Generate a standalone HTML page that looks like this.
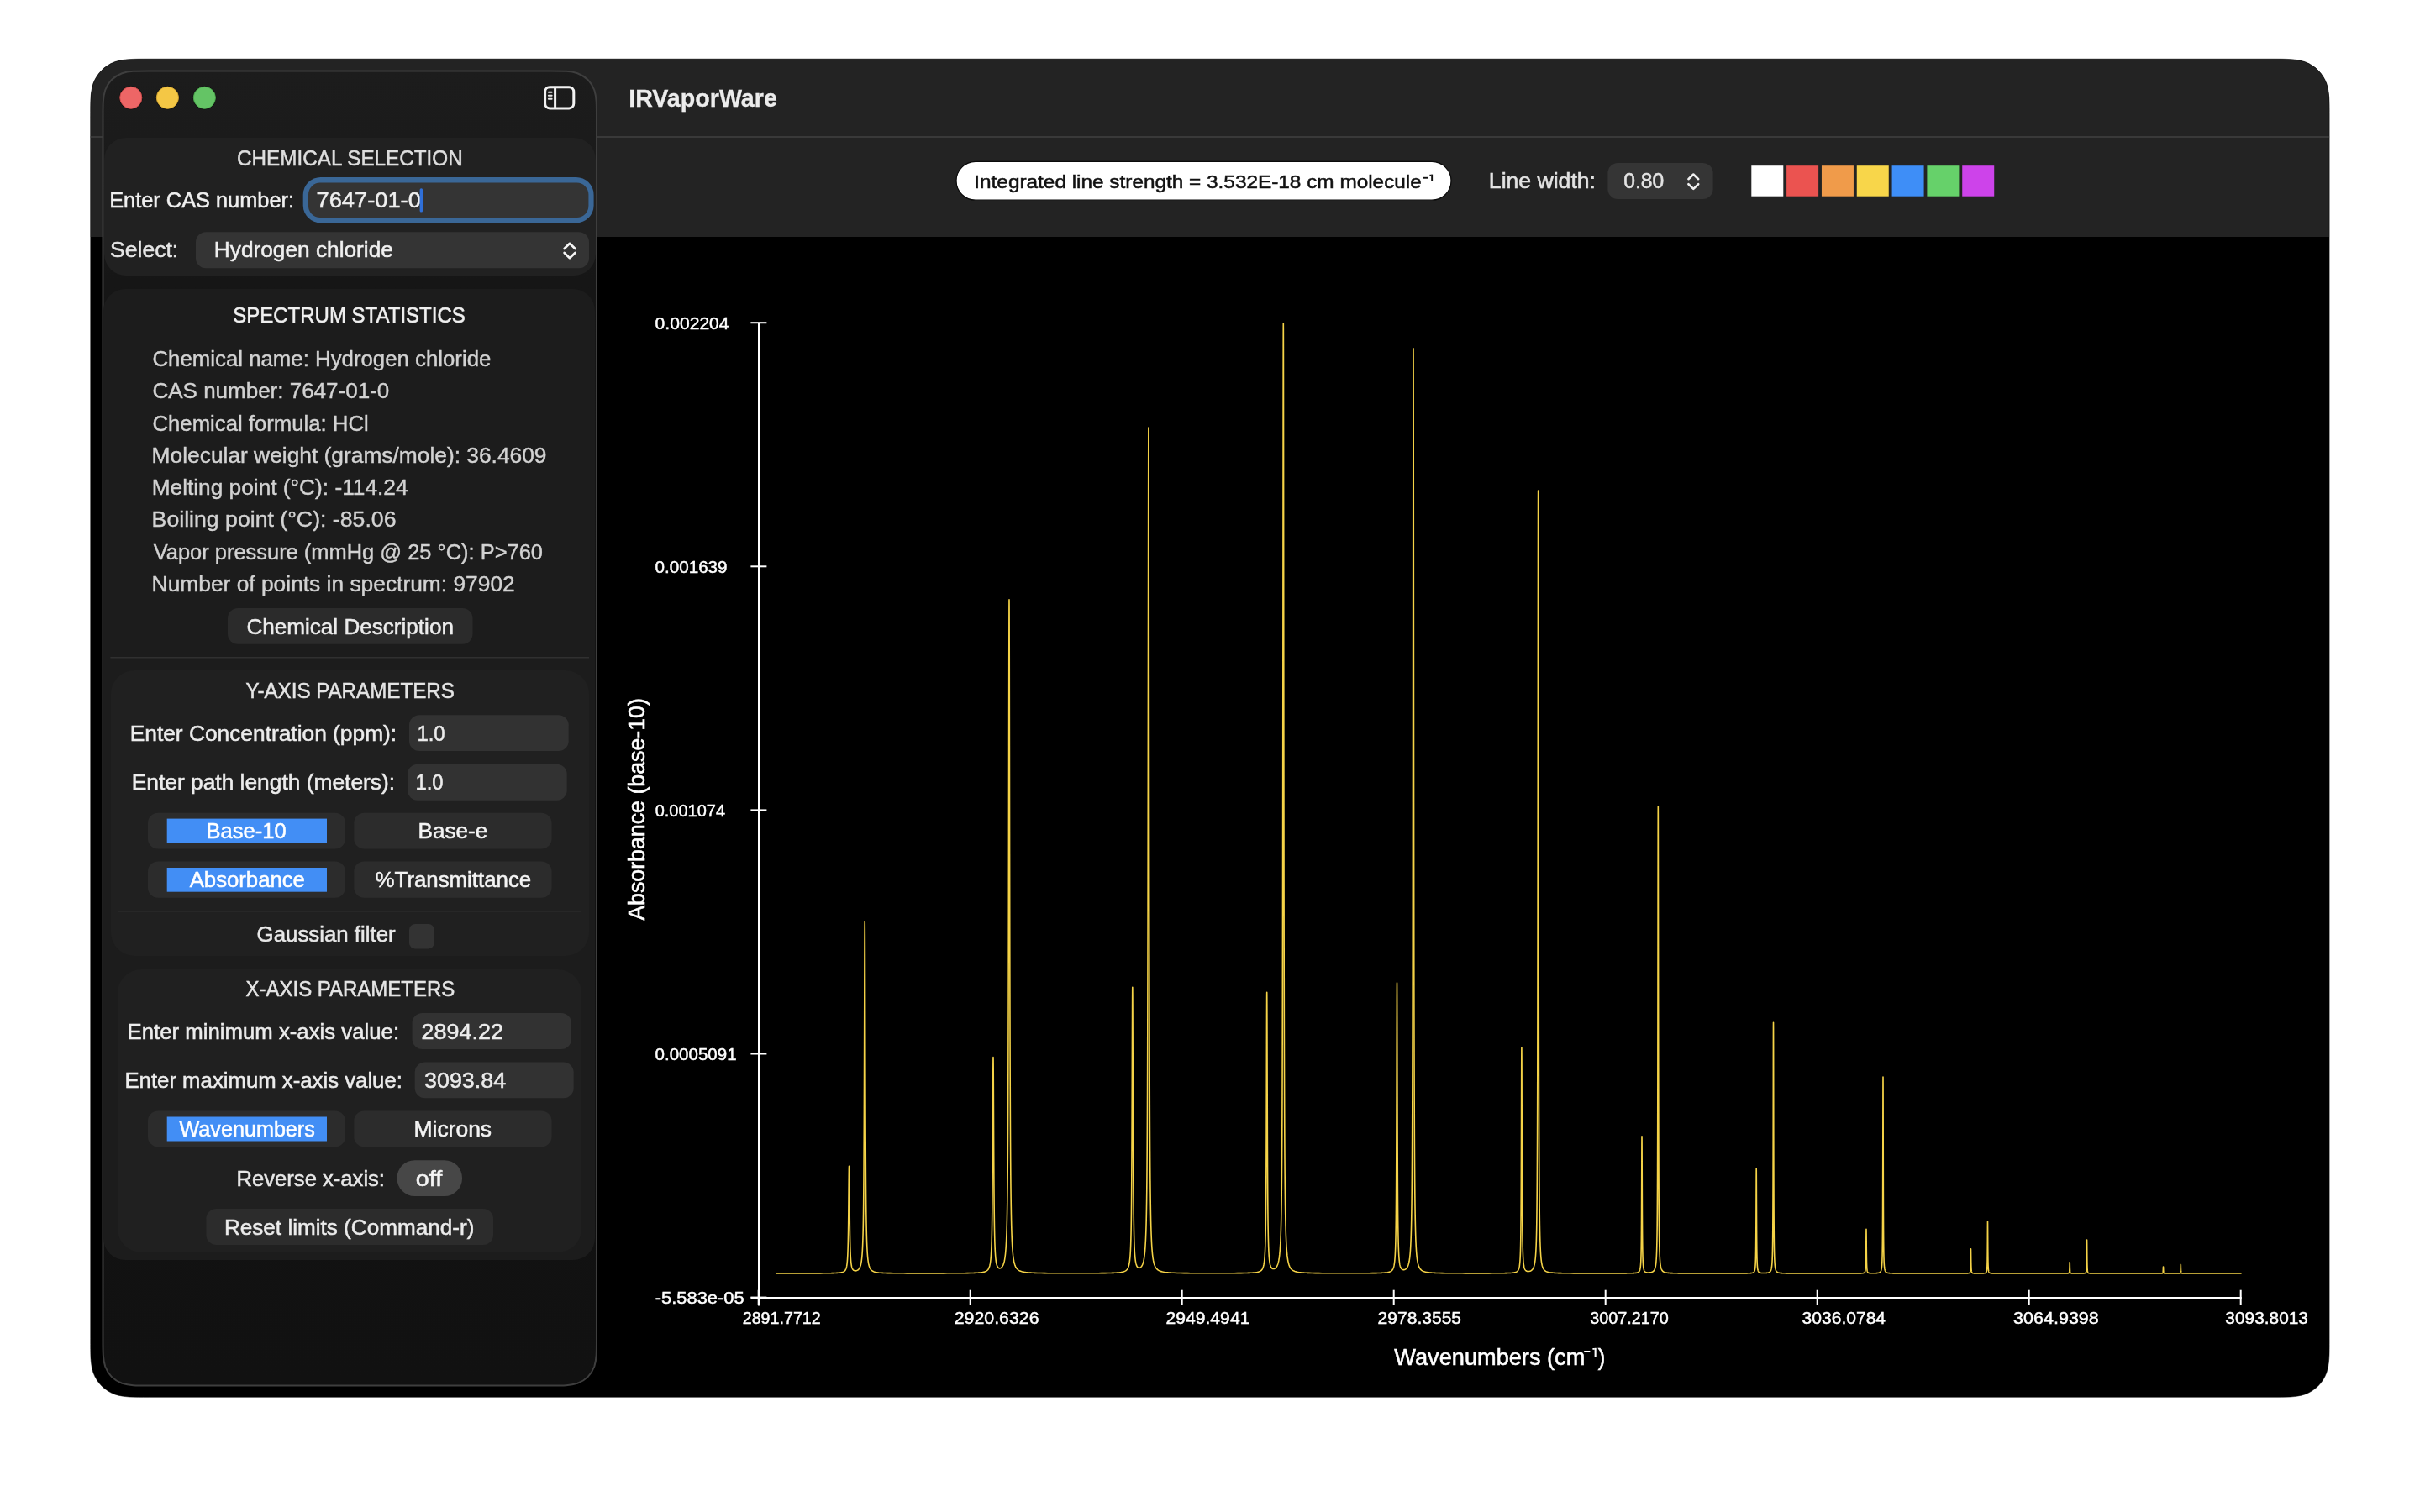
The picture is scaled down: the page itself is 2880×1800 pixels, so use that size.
<!DOCTYPE html><html><head><meta charset="utf-8"><title>IRVaporWare</title><style>html,body{margin:0;padding:0;background:#fff;width:2880px;height:1800px;overflow:hidden}svg{display:block;will-change:transform}text{font-family:"Liberation Sans",sans-serif}</style></head><body>
<svg width="2880" height="1800" viewBox="0 0 2880 1800">
<defs><clipPath id="win"><path d="M177.92 70.20 L2701.88 70.20 C2722.13 70.20 2732.25 70.20 2743.15 73.65 C2755.05 77.98 2764.42 87.35 2768.75 99.25 C2772.20 110.15 2772.20 120.27 2772.20 140.52 L2772.20 1593.08 C2772.20 1613.33 2772.20 1623.45 2768.75 1634.35 C2764.42 1646.25 2755.05 1655.62 2743.15 1659.95 C2732.25 1663.40 2722.13 1663.40 2701.88 1663.40 L177.92 1663.40 C157.67 1663.40 147.55 1663.40 136.65 1659.95 C124.75 1655.62 115.38 1646.25 111.05 1634.35 C107.60 1623.45 107.60 1613.33 107.60 1593.08 L107.60 140.52 C107.60 120.27 107.60 110.15 111.05 99.25 C115.38 87.35 124.75 77.98 136.65 73.65 C147.55 70.20 157.67 70.20 177.92 70.20 Z"/></clipPath>
<linearGradient id="sbg" gradientUnits="userSpaceOnUse" x1="0" y1="84" x2="0" y2="1650"><stop offset="0" stop-color="#1c1c1c"/><stop offset="0.051" stop-color="#1b1b1b"/><stop offset="0.16" stop-color="#161616"/><stop offset="1" stop-color="#111111"/></linearGradient></defs>
<rect width="2880" height="1800" fill="#fff"/>
<g clip-path="url(#win)">
<rect x="107.60" y="70.20" width="2664.60" height="1593.20" rx="0.00" fill="#000" />
<rect x="107.60" y="70.20" width="2664.60" height="211.80" rx="0.00" fill="#232323" />
<rect x="107.60" y="162.00" width="2664.60" height="2.00" rx="0.00" fill="#393939" />
</g>
<path d="M177.92 70.20 L2701.88 70.20 C2722.13 70.20 2732.25 70.20 2743.15 73.65 C2755.05 77.98 2764.42 87.35 2768.75 99.25 C2772.20 110.15 2772.20 120.27 2772.20 140.52 L2772.20 1593.08 C2772.20 1613.33 2772.20 1623.45 2768.75 1634.35 C2764.42 1646.25 2755.05 1655.62 2743.15 1659.95 C2732.25 1663.40 2722.13 1663.40 2701.88 1663.40 L177.92 1663.40 C157.67 1663.40 147.55 1663.40 136.65 1659.95 C124.75 1655.62 115.38 1646.25 111.05 1634.35 C107.60 1623.45 107.60 1613.33 107.60 1593.08 L107.60 140.52 C107.60 120.27 107.60 110.15 111.05 99.25 C115.38 87.35 124.75 77.98 136.65 73.65 C147.55 70.20 157.67 70.20 177.92 70.20 Z" fill="none" stroke="#000" stroke-opacity="0.5" stroke-width="1"/>
<text x="748.27" y="127.00" font-size="30.00" fill="#ececec" font-weight="bold" textLength="176.54" lengthAdjust="spacingAndGlyphs"  stroke="#ececec" stroke-width="0.30">IRVaporWare</text>
<rect x="1138.00" y="192.40" width="589.00" height="45.80" rx="23.00" fill="#ffffff" stroke="#0a0a0a" stroke-width="1.2"/>
<text x="1159.30" y="223.70" font-size="22.20" fill="#111111" textLength="532.53" lengthAdjust="spacingAndGlyphs"  stroke="#111111" stroke-width="0.50">Integrated line strength = 3.532E-18 cm molecule</text>
<rect x="1693.2" y="210.8" width="6.7" height="1.9" fill="#111"/>
<rect x="1703.2" y="207.6" width="1.9" height="7.6" fill="#111"/><rect x="1701.4" y="207.8" width="2" height="1.6" fill="#111"/>
<text x="1771.89" y="224.40" font-size="25.50" fill="#e3e3e3" textLength="127.06" lengthAdjust="spacingAndGlyphs"  stroke="#e3e3e3" stroke-width="0.55">Line width:</text>
<rect x="1913.40" y="194.00" width="125.20" height="43.00" rx="12.00" fill="#353535" />
<text x="1932.31" y="224.40" font-size="25.50" fill="#e3e3e3" textLength="47.98" lengthAdjust="spacingAndGlyphs"  stroke="#e3e3e3" stroke-width="0.55">0.80</text>
<path d="M2009.4 213.2 L2015.3 207.5 L2021.2 213.2 M2009.4 219.2 L2015.3 224.9 L2021.2 219.2" fill="none" stroke="#f0f0f0" stroke-width="2.6" stroke-linecap="round" stroke-linejoin="round"/>
<rect x="2084.30" y="197.20" width="38.00" height="36.50" rx="0.00" fill="#ffffff" />
<rect x="2126.12" y="197.20" width="38.00" height="36.50" rx="0.00" fill="#eb5350" />
<rect x="2167.94" y="197.20" width="38.00" height="36.50" rx="0.00" fill="#f09b4a" />
<rect x="2209.76" y="197.20" width="38.00" height="36.50" rx="0.00" fill="#f8d64a" />
<rect x="2251.58" y="197.20" width="38.00" height="36.50" rx="0.00" fill="#3e8ef7" />
<rect x="2293.40" y="197.20" width="38.00" height="36.50" rx="0.00" fill="#66d16a" />
<rect x="2335.22" y="197.20" width="38.00" height="36.50" rx="0.00" fill="#cd43ea" />
<g fill="#fff">
<rect x="902" y="384" width="2" height="1170.5"/>
<rect x="893.4" y="383.20" width="19" height="2"/>
<rect x="893.4" y="673.30" width="19" height="2"/>
<rect x="893.4" y="963.40" width="19" height="2"/>
<rect x="893.4" y="1253.50" width="19" height="2"/>
<rect x="893.4" y="1543.60" width="19" height="2"/>
<rect x="893.6" y="1544" width="1774.1" height="2"/>
<rect x="901.70" y="1535.7" width="2" height="17.5"/>
<rect x="1153.70" y="1535.7" width="2" height="17.5"/>
<rect x="1405.70" y="1535.7" width="2" height="17.5"/>
<rect x="1657.70" y="1535.7" width="2" height="17.5"/>
<rect x="1909.70" y="1535.7" width="2" height="17.5"/>
<rect x="2161.70" y="1535.7" width="2" height="17.5"/>
<rect x="2413.70" y="1535.7" width="2" height="17.5"/>
<rect x="2665.70" y="1535.7" width="2" height="17.5"/>
</g>
<text x="779.60" y="391.80" font-size="20.20" fill="#fff" textLength="87.99" lengthAdjust="spacingAndGlyphs"  stroke="#fff" stroke-width="0.45">0.002204</text>
<text x="779.62" y="681.90" font-size="20.20" fill="#fff" textLength="85.93" lengthAdjust="spacingAndGlyphs"  stroke="#fff" stroke-width="0.45">0.001639</text>
<text x="779.64" y="972.00" font-size="20.20" fill="#fff" textLength="83.42" lengthAdjust="spacingAndGlyphs"  stroke="#fff" stroke-width="0.45">0.001074</text>
<text x="779.62" y="1262.10" font-size="20.20" fill="#fff" textLength="96.95" lengthAdjust="spacingAndGlyphs"  stroke="#fff" stroke-width="0.45">0.0005091</text>
<text x="779.75" y="1552.20" font-size="20.20" fill="#fff" textLength="105.94" lengthAdjust="spacingAndGlyphs"  stroke="#fff" stroke-width="0.45">-5.583e-05</text>
<text x="883.74" y="1576.00" font-size="19.80" fill="#fff" textLength="93.03" lengthAdjust="spacingAndGlyphs"  stroke="#fff" stroke-width="0.45">2891.7712</text>
<text x="1135.75" y="1576.00" font-size="19.80" fill="#fff" textLength="100.76" lengthAdjust="spacingAndGlyphs"  stroke="#fff" stroke-width="0.45">2920.6326</text>
<text x="1387.46" y="1576.00" font-size="19.80" fill="#fff" textLength="99.95" lengthAdjust="spacingAndGlyphs"  stroke="#fff" stroke-width="0.45">2949.4941</text>
<text x="1639.57" y="1576.00" font-size="19.80" fill="#fff" textLength="99.49" lengthAdjust="spacingAndGlyphs"  stroke="#fff" stroke-width="0.45">2978.3555</text>
<text x="1892.27" y="1576.00" font-size="19.80" fill="#fff" textLength="93.58" lengthAdjust="spacingAndGlyphs"  stroke="#fff" stroke-width="0.45">3007.2170</text>
<text x="2144.62" y="1576.00" font-size="19.80" fill="#fff" textLength="99.47" lengthAdjust="spacingAndGlyphs"  stroke="#fff" stroke-width="0.45">3036.0784</text>
<text x="2396.11" y="1576.00" font-size="19.80" fill="#fff" textLength="101.70" lengthAdjust="spacingAndGlyphs"  stroke="#fff" stroke-width="0.45">3064.9398</text>
<text x="2648.33" y="1576.00" font-size="19.80" fill="#fff" textLength="98.66" lengthAdjust="spacingAndGlyphs"  stroke="#fff" stroke-width="0.45">3093.8013</text>
<text x="1659.36" y="1625.20" font-size="26.90" fill="#fff" textLength="226.95" lengthAdjust="spacingAndGlyphs"  stroke="#fff" stroke-width="0.55">Wavenumbers (cm</text>
<rect x="1885.2" y="1608" width="7.2" height="2" fill="#fff"/>
<rect x="1897.6" y="1604.8" width="2.1" height="11.2" fill="#fff"/><rect x="1895.4" y="1605" width="2.4" height="1.8" fill="#fff"/>
<text x="1901.72" y="1625.20" font-size="26.90" fill="#fff" textLength="8.60" lengthAdjust="spacingAndGlyphs"  stroke="#fff" stroke-width="0.55">)</text>
<g transform="translate(767.4 1096) rotate(-90)">
<text x="0.22" y="0.00" font-size="26.90" fill="#fff" textLength="264.66" lengthAdjust="spacingAndGlyphs"  stroke="#fff" stroke-width="0.55">Absorbance (base-10)</text>
</g>
<polyline points="924.10,1515.95 928.10,1515.95 932.10,1515.95 936.10,1515.94 940.10,1515.94 944.10,1515.93 948.10,1515.93 952.10,1515.92 956.10,1515.91 960.10,1515.90 964.10,1515.89 968.10,1515.88 972.10,1515.86 976.10,1515.84 980.10,1515.80 984.10,1515.76 985.60,1515.74 987.10,1515.71 988.60,1515.69 990.10,1515.65 991.60,1515.61 993.10,1515.56 994.60,1515.50 996.10,1515.42 997.60,1515.31 999.10,1515.17 999.60,1515.11 1000.10,1515.04 1000.60,1514.96 1001.10,1514.87 1001.60,1514.77 1002.10,1514.65 1002.60,1514.51 1003.10,1514.34 1003.60,1514.13 1004.10,1513.88 1004.60,1513.56 1005.10,1513.16 1005.60,1512.64 1006.10,1511.94 1006.60,1510.98 1006.75,1510.62 1006.90,1510.21 1007.05,1509.76 1007.20,1509.24 1007.35,1508.66 1007.50,1508.00 1007.65,1507.24 1007.80,1506.36 1007.95,1505.33 1008.10,1504.14 1008.25,1502.73 1008.40,1501.05 1008.55,1499.04 1008.70,1496.61 1008.85,1493.64 1009.00,1489.98 1009.15,1485.41 1009.20,1483.65 1009.25,1481.74 1009.30,1479.68 1009.35,1477.45 1009.40,1475.04 1009.45,1472.43 1009.50,1469.61 1009.55,1466.56 1009.60,1463.27 1009.65,1459.72 1009.70,1455.90 1009.75,1451.80 1009.80,1447.42 1009.85,1442.76 1009.90,1437.84 1009.95,1432.69 1010.00,1427.34 1010.05,1421.88 1010.10,1416.37 1010.15,1410.95 1010.20,1405.75 1010.25,1400.93 1010.30,1396.65 1010.35,1393.10 1010.40,1390.43 1010.45,1388.77 1010.50,1388.20 1010.55,1388.76 1010.60,1390.41 1010.65,1393.08 1010.70,1396.62 1010.75,1400.89 1010.80,1405.71 1010.85,1410.90 1010.90,1416.32 1010.95,1421.81 1011.00,1427.27 1011.05,1432.61 1011.10,1437.75 1011.15,1442.67 1011.20,1447.32 1011.25,1451.69 1011.30,1455.78 1011.35,1459.60 1011.40,1463.14 1011.45,1466.43 1011.50,1469.47 1011.55,1472.28 1011.60,1474.88 1011.65,1477.28 1011.70,1479.50 1011.75,1481.56 1011.80,1483.46 1011.85,1485.21 1011.90,1486.84 1011.95,1488.36 1012.00,1489.76 1012.05,1491.06 1012.20,1494.45 1012.35,1497.20 1012.50,1499.46 1012.65,1501.33 1012.80,1502.88 1012.95,1504.19 1013.10,1505.30 1013.25,1506.25 1013.40,1507.06 1013.55,1507.77 1013.70,1508.38 1013.85,1508.91 1014.00,1509.37 1014.15,1509.79 1014.30,1510.15 1014.45,1510.47 1014.60,1510.75 1015.10,1511.50 1015.60,1512.01 1016.10,1512.36 1016.60,1512.60 1017.10,1512.75 1017.60,1512.83 1018.10,1512.84 1018.60,1512.80 1019.10,1512.71 1019.60,1512.57 1020.10,1512.37 1020.60,1512.11 1021.10,1511.78 1021.60,1511.35 1022.10,1510.82 1022.60,1510.14 1023.10,1509.28 1023.60,1508.17 1024.10,1506.72 1024.60,1504.76 1025.10,1502.07 1025.60,1498.23 1025.75,1496.76 1025.90,1495.10 1026.05,1493.20 1026.20,1491.04 1026.35,1488.56 1026.50,1485.69 1026.65,1482.35 1026.80,1478.43 1026.95,1473.82 1027.10,1468.33 1027.25,1461.74 1027.40,1453.76 1027.55,1444.00 1027.70,1431.95 1027.85,1416.94 1027.90,1411.13 1027.95,1404.86 1028.00,1398.08 1028.05,1390.74 1028.10,1382.81 1028.15,1374.23 1028.20,1364.95 1028.25,1354.92 1028.30,1344.08 1028.35,1332.39 1028.40,1319.81 1028.45,1306.31 1028.50,1291.89 1028.55,1276.55 1028.60,1260.35 1028.65,1243.37 1028.70,1225.77 1028.75,1207.77 1028.80,1189.65 1028.85,1171.80 1028.90,1154.67 1028.95,1138.78 1029.00,1124.70 1029.05,1113.01 1029.10,1104.21 1029.15,1098.75 1029.20,1096.90 1029.25,1098.75 1029.30,1104.22 1029.35,1113.01 1029.40,1124.71 1029.45,1138.79 1029.50,1154.68 1029.55,1171.81 1029.60,1189.67 1029.65,1207.79 1029.70,1225.79 1029.75,1243.39 1029.80,1260.37 1029.85,1276.58 1029.90,1291.92 1029.95,1306.35 1030.00,1319.85 1030.05,1332.43 1030.10,1344.12 1030.15,1354.96 1030.20,1364.99 1030.25,1374.28 1030.30,1382.86 1030.35,1390.79 1030.40,1398.13 1030.45,1404.91 1030.50,1411.19 1030.55,1417.00 1030.60,1422.39 1030.65,1427.38 1030.70,1432.02 1030.75,1436.33 1030.90,1447.55 1031.05,1456.67 1031.20,1464.16 1031.35,1470.36 1031.50,1475.55 1031.65,1479.92 1031.80,1483.63 1031.95,1486.81 1032.10,1489.55 1032.25,1491.93 1032.40,1494.01 1032.55,1495.83 1032.70,1497.43 1032.85,1498.86 1033.00,1500.12 1033.15,1501.25 1033.30,1502.27 1033.80,1504.99 1034.30,1506.97 1034.80,1508.46 1035.30,1509.61 1035.80,1510.51 1036.30,1511.24 1036.80,1511.82 1037.30,1512.31 1037.80,1512.71 1038.30,1513.05 1038.80,1513.33 1039.30,1513.58 1039.80,1513.79 1040.30,1513.98 1040.80,1514.14 1041.30,1514.29 1042.80,1514.62 1044.30,1514.87 1045.80,1515.05 1047.30,1515.19 1048.80,1515.30 1050.30,1515.39 1051.80,1515.46 1053.30,1515.51 1054.80,1515.56 1056.30,1515.60 1057.80,1515.64 1059.30,1515.67 1063.30,1515.72 1067.30,1515.77 1071.30,1515.80 1075.30,1515.82 1079.30,1515.83 1083.30,1515.84 1087.30,1515.85 1091.30,1515.86 1095.30,1515.86 1099.30,1515.86 1103.30,1515.86 1107.30,1515.86 1111.30,1515.85 1115.30,1515.85 1119.30,1515.84 1123.30,1515.83 1127.30,1515.82 1131.30,1515.80 1135.30,1515.78 1139.30,1515.75 1143.30,1515.72 1147.30,1515.68 1151.30,1515.61 1155.30,1515.53 1156.80,1515.49 1158.30,1515.44 1159.80,1515.39 1161.30,1515.32 1162.80,1515.24 1164.30,1515.15 1165.80,1515.02 1167.30,1514.87 1168.80,1514.67 1170.30,1514.39 1170.80,1514.28 1171.30,1514.15 1171.80,1514.00 1172.30,1513.84 1172.80,1513.64 1173.30,1513.42 1173.80,1513.15 1174.30,1512.84 1174.80,1512.46 1175.30,1512.01 1175.80,1511.44 1176.30,1510.73 1176.80,1509.81 1177.30,1508.61 1177.80,1506.98 1178.30,1504.70 1178.45,1503.83 1178.60,1502.85 1178.75,1501.75 1178.90,1500.49 1179.05,1499.06 1179.20,1497.41 1179.35,1495.51 1179.50,1493.30 1179.65,1490.70 1179.80,1487.63 1179.95,1483.97 1180.10,1479.58 1180.25,1474.25 1180.40,1467.73 1180.55,1459.67 1180.60,1456.56 1180.65,1453.22 1180.70,1449.61 1180.75,1445.72 1180.80,1441.52 1180.85,1436.98 1180.90,1432.07 1180.95,1426.77 1181.00,1421.05 1181.05,1414.86 1181.10,1408.20 1181.15,1401.02 1181.20,1393.30 1181.25,1385.04 1181.30,1376.22 1181.35,1366.87 1181.40,1357.00 1181.45,1346.69 1181.50,1336.02 1181.55,1325.13 1181.60,1314.20 1181.65,1303.45 1181.70,1293.16 1181.75,1283.64 1181.80,1275.21 1181.85,1268.22 1181.90,1262.97 1181.95,1259.71 1182.00,1258.60 1182.05,1259.70 1182.10,1262.94 1182.15,1268.18 1182.20,1275.16 1182.25,1283.57 1182.30,1293.08 1182.35,1303.36 1182.40,1314.09 1182.45,1325.01 1182.50,1335.89 1182.55,1346.54 1182.60,1356.84 1182.65,1366.69 1182.70,1376.03 1182.75,1384.84 1182.80,1393.09 1182.85,1400.79 1182.90,1407.95 1182.95,1414.61 1183.00,1420.78 1183.05,1426.49 1183.10,1431.77 1183.15,1436.66 1183.20,1441.19 1183.25,1445.38 1183.30,1449.26 1183.35,1452.85 1183.40,1456.18 1183.45,1459.27 1183.50,1462.14 1183.55,1464.81 1183.70,1471.76 1183.85,1477.41 1184.00,1482.05 1184.15,1485.89 1184.30,1489.09 1184.45,1491.79 1184.60,1494.08 1184.75,1496.04 1184.90,1497.72 1185.05,1499.17 1185.20,1500.43 1185.35,1501.54 1185.50,1502.51 1185.65,1503.36 1185.80,1504.11 1185.95,1504.78 1186.10,1505.37 1186.60,1506.93 1187.10,1508.01 1187.60,1508.76 1188.10,1509.27 1188.60,1509.61 1189.10,1509.80 1189.60,1509.88 1190.10,1509.84 1190.60,1509.71 1191.10,1509.49 1191.60,1509.16 1192.10,1508.71 1192.60,1508.14 1193.10,1507.41 1193.60,1506.49 1194.10,1505.34 1194.60,1503.88 1195.10,1502.01 1195.60,1499.59 1196.10,1496.38 1196.60,1492.04 1197.10,1485.98 1197.25,1483.69 1197.40,1481.13 1197.55,1478.24 1197.70,1474.98 1197.85,1471.27 1198.00,1467.03 1198.15,1462.16 1198.30,1456.54 1198.45,1450.00 1198.60,1442.35 1198.75,1433.32 1198.90,1422.59 1199.05,1409.72 1199.20,1394.15 1199.35,1375.14 1199.50,1351.70 1199.65,1322.54 1199.70,1311.27 1199.75,1299.10 1199.80,1285.97 1199.85,1271.77 1199.90,1256.44 1199.95,1239.87 1200.00,1221.96 1200.05,1202.63 1200.10,1181.77 1200.15,1159.31 1200.20,1135.18 1200.25,1109.33 1200.30,1081.75 1200.35,1052.47 1200.40,1021.61 1200.45,989.34 1200.50,955.97 1200.55,921.90 1200.60,887.70 1200.65,854.07 1200.70,821.87 1200.75,792.07 1200.80,765.72 1200.85,743.85 1200.90,727.44 1200.95,717.25 1201.00,713.80 1201.05,717.26 1201.10,727.45 1201.15,743.87 1201.20,765.74 1201.25,792.09 1201.30,821.90 1201.35,854.10 1201.40,887.73 1201.45,921.94 1201.50,956.01 1201.55,989.39 1201.60,1021.66 1201.65,1052.53 1201.70,1081.81 1201.75,1109.39 1201.80,1135.25 1201.85,1159.39 1201.90,1181.85 1201.95,1202.71 1202.00,1222.05 1202.05,1239.96 1202.10,1256.53 1202.15,1271.87 1202.20,1286.07 1202.25,1299.21 1202.30,1311.38 1202.35,1322.65 1202.40,1333.11 1202.45,1342.81 1202.50,1351.83 1202.55,1360.21 1202.70,1382.06 1202.85,1399.85 1203.00,1414.46 1203.15,1426.57 1203.30,1436.71 1203.45,1445.26 1203.60,1452.53 1203.75,1458.75 1203.90,1464.12 1204.05,1468.78 1204.20,1472.85 1204.35,1476.41 1204.50,1479.56 1204.65,1482.35 1204.80,1484.83 1204.95,1487.05 1205.10,1489.04 1205.60,1494.39 1206.10,1498.28 1206.60,1501.21 1207.10,1503.46 1207.60,1505.24 1208.10,1506.65 1208.60,1507.81 1209.10,1508.76 1209.60,1509.55 1210.10,1510.21 1210.60,1510.78 1211.10,1511.26 1211.60,1511.68 1212.10,1512.05 1212.60,1512.37 1213.10,1512.65 1214.60,1513.32 1216.10,1513.80 1217.60,1514.16 1219.10,1514.43 1220.60,1514.65 1222.10,1514.82 1223.60,1514.96 1225.10,1515.07 1226.60,1515.17 1228.10,1515.25 1229.60,1515.31 1231.10,1515.37 1235.10,1515.49 1239.10,1515.57 1243.10,1515.63 1247.10,1515.68 1251.10,1515.71 1255.10,1515.74 1259.10,1515.76 1263.10,1515.77 1267.10,1515.78 1271.10,1515.79 1275.10,1515.79 1279.10,1515.79 1283.10,1515.79 1287.10,1515.78 1291.10,1515.77 1295.10,1515.76 1299.10,1515.74 1303.10,1515.72 1307.10,1515.69 1311.10,1515.65 1315.10,1515.59 1319.10,1515.52 1320.60,1515.48 1322.10,1515.44 1323.60,1515.39 1325.10,1515.33 1326.60,1515.27 1328.10,1515.19 1329.60,1515.09 1331.10,1514.96 1332.60,1514.80 1334.10,1514.60 1335.60,1514.33 1337.10,1513.94 1337.60,1513.78 1338.10,1513.59 1338.60,1513.37 1339.10,1513.12 1339.60,1512.83 1340.10,1512.48 1340.60,1512.05 1341.10,1511.54 1341.60,1510.90 1342.10,1510.10 1342.60,1509.07 1343.10,1507.71 1343.60,1505.86 1344.10,1503.27 1344.25,1502.28 1344.40,1501.17 1344.55,1499.91 1344.70,1498.48 1344.85,1496.84 1345.00,1494.95 1345.15,1492.77 1345.30,1490.22 1345.45,1487.21 1345.60,1483.66 1345.75,1479.40 1345.90,1474.27 1346.05,1468.00 1346.20,1460.27 1346.35,1450.63 1346.40,1446.89 1346.45,1442.85 1346.50,1438.48 1346.55,1433.73 1346.60,1428.58 1346.65,1422.99 1346.70,1416.91 1346.75,1410.30 1346.80,1403.11 1346.85,1395.29 1346.90,1386.79 1346.95,1377.55 1347.00,1367.53 1347.05,1356.69 1347.10,1344.99 1347.15,1332.43 1347.20,1319.02 1347.25,1304.82 1347.30,1289.93 1347.35,1274.51 1347.40,1258.80 1347.45,1243.13 1347.50,1227.91 1347.55,1213.63 1347.60,1200.84 1347.65,1190.12 1347.70,1182.00 1347.75,1176.93 1347.80,1175.20 1347.85,1176.92 1347.90,1181.97 1347.95,1190.08 1348.00,1200.79 1348.05,1213.56 1348.10,1227.82 1348.15,1243.03 1348.20,1258.69 1348.25,1274.38 1348.30,1289.79 1348.35,1304.67 1348.40,1318.86 1348.45,1332.25 1348.50,1344.79 1348.55,1356.47 1348.60,1367.30 1348.65,1377.31 1348.70,1386.53 1348.75,1395.02 1348.80,1402.83 1348.85,1410.00 1348.90,1416.60 1348.95,1422.66 1349.00,1428.24 1349.05,1433.38 1349.10,1438.11 1349.15,1442.47 1349.20,1446.49 1349.25,1450.22 1349.30,1453.66 1349.35,1456.85 1349.50,1465.12 1349.65,1471.79 1349.80,1477.22 1349.95,1481.70 1350.10,1485.43 1350.25,1488.56 1350.40,1491.20 1350.55,1493.45 1350.70,1495.38 1350.85,1497.05 1351.00,1498.50 1351.15,1499.76 1351.30,1500.87 1351.45,1501.84 1351.60,1502.70 1351.75,1503.47 1351.90,1504.15 1352.40,1505.92 1352.90,1507.16 1353.40,1508.03 1353.90,1508.63 1354.40,1509.02 1354.90,1509.27 1355.40,1509.38 1355.90,1509.37 1356.40,1509.26 1356.90,1509.04 1357.40,1508.72 1357.90,1508.27 1358.40,1507.69 1358.90,1506.95 1359.40,1506.02 1359.90,1504.85 1360.40,1503.36 1360.90,1501.47 1361.40,1499.01 1361.90,1495.77 1362.40,1491.39 1362.90,1485.31 1363.40,1476.56 1363.55,1473.17 1363.70,1469.33 1363.85,1464.94 1364.00,1459.91 1364.15,1454.09 1364.30,1447.32 1364.45,1439.39 1364.60,1430.04 1364.75,1418.91 1364.90,1405.55 1365.05,1389.35 1365.20,1369.50 1365.35,1344.92 1365.50,1314.14 1365.55,1302.17 1365.60,1289.21 1365.65,1275.17 1365.70,1259.92 1365.75,1243.36 1365.80,1225.36 1365.85,1205.78 1365.90,1184.48 1365.95,1161.31 1366.00,1136.11 1366.05,1108.74 1366.10,1079.05 1366.15,1046.92 1366.20,1012.26 1366.25,975.04 1366.30,935.31 1366.35,893.22 1366.40,849.07 1366.45,803.37 1366.50,756.81 1366.55,710.36 1366.60,665.25 1366.65,622.93 1366.70,585.04 1366.75,553.28 1366.80,529.22 1366.85,514.21 1366.90,509.10 1366.95,514.21 1367.00,529.23 1367.05,553.29 1367.10,585.06 1367.15,622.96 1367.20,665.28 1367.25,710.39 1367.30,756.85 1367.35,803.41 1367.40,849.12 1367.45,893.27 1367.50,935.36 1367.55,975.10 1367.60,1012.33 1367.65,1046.99 1367.70,1079.13 1367.75,1108.82 1367.80,1136.20 1367.85,1161.40 1367.90,1184.57 1367.95,1205.88 1368.00,1225.46 1368.05,1243.47 1368.10,1260.03 1368.15,1275.29 1368.20,1289.34 1368.25,1302.30 1368.30,1314.27 1368.35,1325.34 1368.40,1335.58 1368.45,1345.07 1368.60,1369.66 1368.75,1389.53 1368.90,1405.74 1369.05,1419.12 1369.20,1430.27 1369.35,1439.63 1369.50,1447.57 1369.65,1454.36 1369.80,1460.19 1369.95,1465.25 1370.10,1469.65 1370.25,1473.51 1370.40,1476.91 1370.55,1479.92 1370.70,1482.60 1370.85,1484.99 1371.00,1487.13 1371.50,1492.87 1372.00,1497.05 1372.50,1500.19 1373.00,1502.60 1373.50,1504.50 1374.00,1506.01 1374.50,1507.25 1375.00,1508.26 1375.50,1509.10 1376.00,1509.82 1376.50,1510.42 1377.00,1510.94 1377.50,1511.39 1378.00,1511.78 1378.50,1512.12 1379.00,1512.42 1380.50,1513.13 1382.00,1513.64 1383.50,1514.03 1385.00,1514.32 1386.50,1514.55 1388.00,1514.73 1389.50,1514.88 1391.00,1515.00 1392.50,1515.10 1394.00,1515.19 1395.50,1515.26 1397.00,1515.32 1401.00,1515.45 1405.00,1515.54 1409.00,1515.61 1413.00,1515.66 1417.00,1515.69 1421.00,1515.72 1425.00,1515.74 1429.00,1515.76 1433.00,1515.77 1437.00,1515.77 1441.00,1515.78 1445.00,1515.78 1449.00,1515.78 1453.00,1515.77 1457.00,1515.76 1461.00,1515.75 1465.00,1515.73 1469.00,1515.70 1473.00,1515.66 1477.00,1515.61 1481.00,1515.53 1482.50,1515.50 1484.00,1515.46 1485.50,1515.41 1487.00,1515.35 1488.50,1515.28 1490.00,1515.19 1491.50,1515.08 1493.00,1514.94 1494.50,1514.76 1496.00,1514.52 1496.50,1514.41 1497.00,1514.30 1497.50,1514.17 1498.00,1514.02 1498.50,1513.84 1499.00,1513.64 1499.50,1513.40 1500.00,1513.12 1500.50,1512.78 1501.00,1512.37 1501.50,1511.86 1502.00,1511.21 1502.50,1510.39 1503.00,1509.29 1503.50,1507.81 1504.00,1505.72 1504.15,1504.92 1504.30,1504.02 1504.45,1503.01 1504.60,1501.84 1504.75,1500.51 1504.90,1498.98 1505.05,1497.20 1505.20,1495.11 1505.35,1492.65 1505.50,1489.72 1505.65,1486.21 1505.80,1481.94 1505.95,1476.70 1506.10,1470.18 1506.25,1461.97 1506.30,1458.77 1506.35,1455.28 1506.40,1451.49 1506.45,1447.36 1506.50,1442.85 1506.55,1437.92 1506.60,1432.53 1506.65,1426.62 1506.70,1420.14 1506.75,1413.02 1506.80,1405.21 1506.85,1396.63 1506.90,1387.22 1506.95,1376.90 1507.00,1365.62 1507.05,1353.32 1507.10,1339.98 1507.15,1325.60 1507.20,1310.23 1507.25,1294.01 1507.30,1277.15 1507.35,1259.99 1507.40,1242.98 1507.45,1226.70 1507.50,1211.85 1507.55,1199.21 1507.60,1189.51 1507.65,1183.39 1507.70,1181.30 1507.75,1183.38 1507.80,1189.48 1507.85,1199.17 1507.90,1211.81 1507.95,1226.64 1508.00,1242.90 1508.05,1259.91 1508.10,1277.06 1508.15,1293.91 1508.20,1310.11 1508.25,1325.46 1508.30,1339.83 1508.35,1353.17 1508.40,1365.45 1508.45,1376.72 1508.50,1387.03 1508.55,1396.43 1508.60,1404.99 1508.65,1412.79 1508.70,1419.90 1508.75,1426.37 1508.80,1432.26 1508.85,1437.65 1508.90,1442.56 1508.95,1447.06 1509.00,1451.18 1509.05,1454.96 1509.10,1458.43 1509.15,1461.63 1509.20,1464.57 1509.25,1467.29 1509.40,1474.28 1509.55,1479.87 1509.70,1484.39 1509.85,1488.10 1510.00,1491.17 1510.15,1493.74 1510.30,1495.90 1510.45,1497.74 1510.60,1499.31 1510.75,1500.66 1510.90,1501.83 1511.05,1502.85 1511.20,1503.75 1511.35,1504.53 1511.50,1505.23 1511.65,1505.84 1511.80,1506.39 1512.30,1507.81 1512.80,1508.80 1513.30,1509.49 1513.80,1509.97 1514.30,1510.28 1514.80,1510.47 1515.30,1510.56 1515.80,1510.56 1516.30,1510.47 1516.80,1510.30 1517.30,1510.04 1517.80,1509.70 1518.30,1509.26 1518.80,1508.70 1519.30,1507.99 1519.80,1507.12 1520.30,1506.03 1520.80,1504.65 1521.30,1502.90 1521.80,1500.64 1522.30,1497.65 1522.80,1493.63 1523.30,1488.03 1523.80,1479.95 1523.95,1476.82 1524.10,1473.26 1524.25,1469.19 1524.40,1464.51 1524.55,1459.10 1524.70,1452.78 1524.85,1445.37 1525.00,1436.59 1525.15,1426.10 1525.30,1413.45 1525.45,1398.03 1525.60,1379.00 1525.75,1355.23 1525.90,1325.14 1525.95,1313.34 1526.00,1300.51 1526.05,1286.52 1526.10,1271.24 1526.15,1254.55 1526.20,1236.28 1526.25,1216.26 1526.30,1194.30 1526.35,1170.19 1526.40,1143.73 1526.45,1114.66 1526.50,1082.77 1526.55,1047.81 1526.60,1009.57 1526.65,967.89 1526.70,922.67 1526.75,873.92 1526.80,821.85 1526.85,766.88 1526.90,709.74 1526.95,651.56 1527.00,593.89 1527.05,538.72 1527.10,488.41 1527.15,445.55 1527.20,412.68 1527.25,391.98 1527.30,384.90 1527.35,391.98 1527.40,412.69 1527.45,445.57 1527.50,488.43 1527.55,538.74 1527.60,593.91 1527.65,651.59 1527.70,709.77 1527.75,766.91 1527.80,821.89 1527.85,873.96 1527.90,922.71 1527.95,967.93 1528.00,1009.62 1528.05,1047.86 1528.10,1082.82 1528.15,1114.72 1528.20,1143.79 1528.25,1170.26 1528.30,1194.37 1528.35,1216.33 1528.40,1236.36 1528.45,1254.63 1528.50,1271.33 1528.55,1286.60 1528.60,1300.60 1528.65,1313.44 1528.70,1325.24 1528.75,1336.09 1528.80,1346.10 1528.85,1355.34 1529.00,1379.12 1529.15,1398.16 1529.30,1413.60 1529.45,1426.26 1529.60,1436.76 1529.75,1445.55 1529.90,1452.97 1530.05,1459.30 1530.20,1464.73 1530.35,1469.42 1530.50,1473.50 1530.65,1477.07 1530.80,1480.21 1530.95,1482.99 1531.10,1485.46 1531.25,1487.66 1531.40,1489.63 1531.90,1494.90 1532.40,1498.73 1532.90,1501.60 1533.40,1503.81 1533.90,1505.54 1534.40,1506.93 1534.90,1508.05 1535.40,1508.97 1535.90,1509.74 1536.40,1510.39 1536.90,1510.94 1537.40,1511.41 1537.90,1511.82 1538.40,1512.17 1538.90,1512.48 1539.40,1512.76 1540.90,1513.40 1542.40,1513.87 1543.90,1514.22 1545.40,1514.48 1546.90,1514.69 1548.40,1514.86 1549.90,1514.99 1551.40,1515.10 1552.90,1515.19 1554.40,1515.27 1555.90,1515.34 1557.40,1515.39 1561.40,1515.51 1565.40,1515.59 1569.40,1515.65 1573.40,1515.69 1577.40,1515.72 1581.40,1515.75 1585.40,1515.77 1589.40,1515.78 1593.40,1515.79 1597.40,1515.80 1601.40,1515.80 1605.40,1515.80 1609.40,1515.79 1613.40,1515.79 1617.40,1515.78 1621.40,1515.76 1625.40,1515.74 1629.40,1515.70 1633.40,1515.66 1634.90,1515.63 1636.40,1515.61 1637.90,1515.58 1639.40,1515.54 1640.90,1515.50 1642.40,1515.45 1643.90,1515.39 1645.40,1515.31 1646.90,1515.22 1648.40,1515.09 1649.90,1514.93 1651.40,1514.70 1651.90,1514.60 1652.40,1514.49 1652.90,1514.37 1653.40,1514.22 1653.90,1514.05 1654.40,1513.85 1654.90,1513.61 1655.40,1513.32 1655.90,1512.97 1656.40,1512.54 1656.90,1511.98 1657.40,1511.26 1657.90,1510.31 1658.40,1509.01 1658.90,1507.15 1659.05,1506.43 1659.20,1505.62 1659.35,1504.70 1659.50,1503.65 1659.65,1502.43 1659.80,1501.02 1659.95,1499.36 1660.10,1497.41 1660.25,1495.09 1660.40,1492.30 1660.55,1488.91 1660.70,1484.74 1660.85,1479.54 1661.00,1472.96 1661.15,1464.50 1661.20,1461.14 1661.25,1457.47 1661.30,1453.44 1661.35,1449.00 1661.40,1444.12 1661.45,1438.72 1661.50,1432.75 1661.55,1426.15 1661.60,1418.82 1661.65,1410.68 1661.70,1401.64 1661.75,1391.60 1661.80,1380.45 1661.85,1368.10 1661.90,1354.46 1661.95,1339.46 1662.00,1323.10 1662.05,1305.42 1662.10,1286.60 1662.15,1266.95 1662.20,1246.97 1662.25,1227.36 1662.30,1209.05 1662.35,1193.11 1662.40,1180.67 1662.45,1172.73 1662.50,1170.00 1662.55,1172.72 1662.60,1180.65 1662.65,1193.08 1662.70,1209.01 1662.75,1227.31 1662.80,1246.91 1662.85,1266.89 1662.90,1286.53 1662.95,1305.34 1663.00,1323.00 1663.05,1339.36 1663.10,1354.35 1663.15,1367.98 1663.20,1380.32 1663.25,1391.46 1663.30,1401.49 1663.35,1410.52 1663.40,1418.65 1663.45,1425.97 1663.50,1432.57 1663.55,1438.52 1663.60,1443.91 1663.65,1448.79 1663.70,1453.21 1663.75,1457.24 1663.80,1460.90 1663.85,1464.25 1663.90,1467.30 1663.95,1470.10 1664.00,1472.68 1664.05,1475.04 1664.20,1481.08 1664.35,1485.88 1664.50,1489.74 1664.65,1492.88 1664.80,1495.47 1664.95,1497.63 1665.10,1499.44 1665.25,1500.98 1665.40,1502.29 1665.55,1503.42 1665.70,1504.40 1665.85,1505.25 1666.00,1505.99 1666.15,1506.64 1666.30,1507.22 1666.45,1507.72 1666.60,1508.18 1667.10,1509.36 1667.60,1510.18 1668.10,1510.75 1668.60,1511.15 1669.10,1511.41 1669.60,1511.58 1670.10,1511.65 1670.60,1511.66 1671.10,1511.60 1671.60,1511.47 1672.10,1511.27 1672.60,1511.00 1673.10,1510.65 1673.60,1510.20 1674.10,1509.65 1674.60,1508.95 1675.10,1508.07 1675.60,1506.96 1676.10,1505.54 1676.60,1503.70 1677.10,1501.25 1677.60,1497.93 1678.10,1493.27 1678.25,1491.50 1678.40,1489.52 1678.55,1487.27 1678.70,1484.73 1678.85,1481.82 1679.00,1478.49 1679.15,1474.64 1679.30,1470.17 1679.45,1464.93 1679.60,1458.75 1679.75,1451.38 1679.90,1442.52 1680.05,1431.74 1680.20,1418.47 1680.35,1401.91 1680.50,1380.96 1680.65,1354.02 1680.70,1343.34 1680.75,1331.63 1680.80,1318.78 1680.85,1304.64 1680.90,1289.06 1680.95,1271.87 1681.00,1252.85 1681.05,1231.78 1681.10,1208.41 1681.15,1182.47 1681.20,1153.65 1681.25,1121.62 1681.30,1086.08 1681.35,1046.69 1681.40,1003.18 1681.45,955.35 1681.50,903.16 1681.55,846.79 1681.60,786.77 1681.65,724.09 1681.70,660.35 1681.75,597.82 1681.80,539.42 1681.85,488.59 1681.90,448.91 1681.95,423.60 1682.00,414.90 1682.05,423.61 1682.10,448.92 1682.15,488.59 1682.20,539.43 1682.25,597.83 1682.30,660.37 1682.35,724.11 1682.40,786.79 1682.45,846.82 1682.50,903.19 1682.55,955.38 1682.60,1003.21 1682.65,1046.73 1682.70,1086.12 1682.75,1121.67 1682.80,1153.69 1682.85,1182.52 1682.90,1208.47 1682.95,1231.84 1683.00,1252.91 1683.05,1271.93 1683.10,1289.13 1683.15,1304.71 1683.20,1318.85 1683.25,1331.70 1683.30,1343.41 1683.35,1354.10 1683.40,1363.88 1683.45,1372.83 1683.50,1381.05 1683.55,1388.61 1683.70,1407.96 1683.85,1423.32 1684.00,1435.69 1684.15,1445.79 1684.30,1454.12 1684.45,1461.07 1684.60,1466.93 1684.75,1471.91 1684.90,1476.17 1685.05,1479.84 1685.20,1483.03 1685.35,1485.82 1685.50,1488.27 1685.65,1490.44 1685.80,1492.36 1685.95,1494.07 1686.10,1495.60 1686.60,1499.69 1687.10,1502.66 1687.60,1504.88 1688.10,1506.59 1688.60,1507.93 1689.10,1509.00 1689.60,1509.86 1690.10,1510.58 1690.60,1511.17 1691.10,1511.67 1691.60,1512.09 1692.10,1512.46 1692.60,1512.77 1693.10,1513.04 1693.60,1513.28 1694.10,1513.49 1695.60,1513.99 1697.10,1514.35 1698.60,1514.62 1700.10,1514.82 1701.60,1514.99 1703.10,1515.11 1704.60,1515.22 1706.10,1515.30 1707.60,1515.37 1709.10,1515.43 1710.60,1515.48 1712.10,1515.53 1716.10,1515.62 1720.10,1515.68 1724.10,1515.73 1728.10,1515.76 1732.10,1515.79 1736.10,1515.81 1740.10,1515.82 1744.10,1515.83 1748.10,1515.84 1752.10,1515.85 1756.10,1515.85 1760.10,1515.85 1764.10,1515.85 1768.10,1515.84 1772.10,1515.83 1776.10,1515.82 1780.10,1515.79 1784.10,1515.76 1785.60,1515.75 1787.10,1515.73 1788.60,1515.71 1790.10,1515.68 1791.60,1515.65 1793.10,1515.61 1794.60,1515.57 1796.10,1515.51 1797.60,1515.43 1799.10,1515.32 1799.60,1515.27 1800.10,1515.22 1800.60,1515.17 1801.10,1515.10 1801.60,1515.02 1802.10,1514.94 1802.60,1514.83 1803.10,1514.71 1803.60,1514.56 1804.10,1514.38 1804.60,1514.16 1805.10,1513.89 1805.60,1513.53 1806.10,1513.06 1806.60,1512.43 1807.10,1511.54 1807.25,1511.20 1807.40,1510.82 1807.55,1510.39 1807.70,1509.90 1807.85,1509.33 1808.00,1508.68 1808.15,1507.93 1808.30,1507.05 1808.45,1506.01 1808.60,1504.77 1808.75,1503.28 1808.90,1501.47 1809.05,1499.24 1809.20,1496.45 1809.35,1492.90 1809.50,1488.31 1809.55,1486.47 1809.60,1484.46 1809.65,1482.24 1809.70,1479.78 1809.75,1477.06 1809.80,1474.04 1809.85,1470.67 1809.90,1466.91 1809.95,1462.69 1810.00,1457.95 1810.05,1452.62 1810.10,1446.59 1810.15,1439.77 1810.20,1432.05 1810.25,1423.30 1810.30,1413.38 1810.35,1402.17 1810.40,1389.53 1810.45,1375.40 1810.50,1359.78 1810.55,1342.77 1810.60,1324.72 1810.65,1306.21 1810.70,1288.16 1810.75,1271.82 1810.80,1258.63 1810.85,1250.01 1810.90,1247.00 1810.95,1250.00 1811.00,1258.62 1811.05,1271.81 1811.10,1288.14 1811.15,1306.18 1811.20,1324.69 1811.25,1342.74 1811.30,1359.73 1811.35,1375.36 1811.40,1389.48 1811.45,1402.11 1811.50,1413.32 1811.55,1423.23 1811.60,1431.98 1811.65,1439.69 1811.70,1446.51 1811.75,1452.53 1811.80,1457.86 1811.85,1462.59 1811.90,1466.80 1811.95,1470.56 1812.00,1473.92 1812.05,1476.94 1812.10,1479.66 1812.15,1482.10 1812.20,1484.32 1812.25,1486.33 1812.30,1488.15 1812.35,1489.82 1812.40,1491.34 1812.45,1492.73 1812.60,1496.26 1812.75,1499.04 1812.90,1501.25 1813.05,1503.05 1813.20,1504.52 1813.35,1505.74 1813.50,1506.76 1813.65,1507.62 1813.80,1508.36 1813.95,1508.99 1814.10,1509.53 1814.25,1510.01 1814.40,1510.42 1814.55,1510.78 1814.70,1511.10 1814.85,1511.38 1815.00,1511.63 1815.50,1512.28 1816.00,1512.73 1816.50,1513.05 1817.00,1513.26 1817.50,1513.41 1818.00,1513.49 1818.50,1513.53 1819.00,1513.53 1819.50,1513.49 1820.00,1513.42 1820.50,1513.31 1821.00,1513.15 1821.50,1512.95 1822.00,1512.71 1822.50,1512.39 1823.00,1512.01 1823.50,1511.52 1824.00,1510.91 1824.50,1510.14 1825.00,1509.15 1825.50,1507.84 1826.00,1506.08 1826.50,1503.63 1827.00,1500.12 1827.15,1498.76 1827.30,1497.22 1827.45,1495.45 1827.60,1493.43 1827.75,1491.08 1827.90,1488.35 1828.05,1485.15 1828.20,1481.35 1828.35,1476.81 1828.50,1471.32 1828.65,1464.61 1828.80,1456.30 1828.95,1445.85 1829.10,1432.48 1829.15,1427.19 1829.20,1421.40 1829.25,1415.05 1829.30,1408.07 1829.35,1400.37 1829.40,1391.86 1829.45,1382.42 1829.50,1371.94 1829.55,1360.26 1829.60,1347.20 1829.65,1332.57 1829.70,1316.13 1829.75,1297.61 1829.80,1276.70 1829.85,1253.05 1829.90,1226.25 1829.95,1195.88 1830.00,1161.46 1830.05,1122.53 1830.10,1078.69 1830.15,1029.65 1830.20,975.41 1830.25,916.40 1830.30,853.74 1830.35,789.49 1830.40,726.86 1830.45,670.13 1830.50,624.35 1830.55,594.43 1830.60,584.00 1830.65,594.43 1830.70,624.36 1830.75,670.14 1830.80,726.86 1830.85,789.50 1830.90,853.75 1830.95,916.41 1831.00,975.42 1831.05,1029.66 1831.10,1078.70 1831.15,1122.55 1831.20,1161.48 1831.25,1195.90 1831.30,1226.28 1831.35,1253.07 1831.40,1276.73 1831.45,1297.64 1831.50,1316.16 1831.55,1332.60 1831.60,1347.23 1831.65,1360.29 1831.70,1371.98 1831.75,1382.46 1831.80,1391.90 1831.85,1400.41 1831.90,1408.11 1831.95,1415.10 1832.00,1421.45 1832.05,1427.24 1832.10,1432.53 1832.15,1437.37 1832.30,1449.67 1832.45,1459.34 1832.60,1467.07 1832.75,1473.34 1832.90,1478.49 1833.05,1482.77 1833.20,1486.36 1833.35,1489.40 1833.50,1492.00 1833.65,1494.24 1833.80,1496.17 1833.95,1497.86 1834.10,1499.35 1834.25,1500.66 1834.40,1501.82 1834.55,1502.85 1834.70,1503.77 1835.20,1506.24 1835.70,1508.02 1836.20,1509.35 1836.70,1510.38 1837.20,1511.18 1837.70,1511.82 1838.20,1512.34 1838.70,1512.76 1839.20,1513.12 1839.70,1513.41 1840.20,1513.67 1840.70,1513.88 1841.20,1514.07 1841.70,1514.24 1842.20,1514.38 1842.70,1514.50 1844.20,1514.80 1845.70,1515.01 1847.20,1515.17 1848.70,1515.30 1850.20,1515.39 1851.70,1515.47 1853.20,1515.53 1854.70,1515.58 1856.20,1515.62 1857.70,1515.66 1859.20,1515.69 1860.70,1515.72 1864.70,1515.77 1868.70,1515.81 1872.70,1515.83 1876.70,1515.86 1880.70,1515.87 1884.70,1515.88 1888.70,1515.89 1892.70,1515.90 1896.70,1515.91 1900.70,1515.91 1904.70,1515.91 1908.70,1515.91 1912.70,1515.91 1916.70,1515.91 1920.70,1515.90 1924.70,1515.89 1926.20,1515.89 1927.70,1515.89 1929.20,1515.88 1930.70,1515.87 1932.20,1515.86 1933.70,1515.85 1935.20,1515.84 1936.70,1515.82 1938.20,1515.80 1939.70,1515.78 1941.20,1515.74 1942.70,1515.70 1943.20,1515.68 1943.70,1515.65 1944.20,1515.63 1944.70,1515.60 1945.20,1515.56 1945.70,1515.52 1946.20,1515.47 1946.70,1515.41 1947.20,1515.34 1947.70,1515.25 1948.20,1515.14 1948.70,1515.00 1949.20,1514.81 1949.70,1514.56 1950.20,1514.20 1950.35,1514.07 1950.50,1513.91 1950.65,1513.74 1950.80,1513.54 1950.95,1513.32 1951.10,1513.05 1951.25,1512.75 1951.40,1512.39 1951.55,1511.97 1951.70,1511.47 1951.85,1510.86 1952.00,1510.11 1952.15,1509.19 1952.30,1508.03 1952.45,1506.54 1952.60,1504.60 1952.65,1503.82 1952.70,1502.95 1952.75,1501.99 1952.80,1500.93 1952.85,1499.74 1952.90,1498.40 1952.95,1496.90 1953.00,1495.21 1953.05,1493.30 1953.10,1491.12 1953.15,1488.63 1953.20,1485.77 1953.25,1482.48 1953.30,1478.68 1953.35,1474.26 1953.40,1469.12 1953.45,1463.11 1953.50,1456.10 1953.55,1447.93 1953.60,1438.46 1953.65,1427.60 1953.70,1415.37 1953.75,1402.03 1953.80,1388.15 1953.85,1374.77 1953.90,1363.36 1953.95,1355.57 1954.00,1352.80 1954.05,1355.57 1954.10,1363.35 1954.15,1374.76 1954.20,1388.14 1954.25,1402.02 1954.30,1415.36 1954.35,1427.58 1954.40,1438.44 1954.45,1447.91 1954.50,1456.08 1954.55,1463.09 1954.60,1469.09 1954.65,1474.23 1954.70,1478.65 1954.75,1482.45 1954.80,1485.74 1954.85,1488.59 1954.90,1491.08 1954.95,1493.25 1955.00,1495.17 1955.05,1496.86 1955.10,1498.35 1955.15,1499.68 1955.20,1500.87 1955.25,1501.94 1955.30,1502.89 1955.35,1503.76 1955.40,1504.54 1955.45,1505.24 1955.50,1505.89 1955.55,1506.48 1955.70,1507.96 1955.85,1509.11 1956.00,1510.02 1956.15,1510.76 1956.30,1511.36 1956.45,1511.86 1956.60,1512.27 1956.75,1512.62 1956.90,1512.92 1957.05,1513.17 1957.20,1513.39 1957.35,1513.58 1957.50,1513.75 1957.65,1513.89 1957.80,1514.02 1957.95,1514.14 1958.10,1514.23 1958.60,1514.49 1959.10,1514.67 1959.60,1514.80 1960.10,1514.88 1960.60,1514.93 1961.10,1514.97 1961.60,1514.98 1962.10,1514.97 1962.60,1514.95 1963.10,1514.92 1963.60,1514.86 1964.10,1514.79 1964.60,1514.70 1965.10,1514.59 1965.60,1514.45 1966.10,1514.27 1966.60,1514.04 1967.10,1513.75 1967.60,1513.38 1968.10,1512.90 1968.60,1512.25 1969.10,1511.35 1969.60,1510.07 1969.75,1509.58 1969.90,1509.02 1970.05,1508.38 1970.20,1507.65 1970.35,1506.81 1970.50,1505.83 1970.65,1504.69 1970.80,1503.33 1970.95,1501.72 1971.10,1499.78 1971.25,1497.42 1971.40,1494.51 1971.55,1490.86 1971.70,1486.21 1971.85,1480.17 1971.90,1477.75 1971.95,1475.08 1972.00,1472.13 1972.05,1468.86 1972.10,1465.23 1972.15,1461.17 1972.20,1456.62 1972.25,1451.51 1972.30,1445.75 1972.35,1439.21 1972.40,1431.78 1972.45,1423.29 1972.50,1413.55 1972.55,1402.33 1972.60,1389.35 1972.65,1374.28 1972.70,1356.73 1972.75,1336.25 1972.80,1312.34 1972.85,1284.46 1972.90,1252.15 1972.95,1215.09 1973.00,1173.38 1973.05,1127.86 1973.10,1080.51 1973.15,1034.86 1973.20,995.91 1973.25,969.36 1973.30,959.90 1973.35,969.36 1973.40,995.91 1973.45,1034.86 1973.50,1080.51 1973.55,1127.86 1973.60,1173.39 1973.65,1215.10 1973.70,1252.16 1973.75,1284.47 1973.80,1312.34 1973.85,1336.26 1973.90,1356.74 1973.95,1374.29 1974.00,1389.36 1974.05,1402.34 1974.10,1413.56 1974.15,1423.30 1974.20,1431.79 1974.25,1439.23 1974.30,1445.76 1974.35,1451.53 1974.40,1456.64 1974.45,1461.18 1974.50,1465.24 1974.55,1468.88 1974.60,1472.15 1974.65,1475.10 1974.70,1477.77 1974.75,1480.19 1974.80,1482.39 1974.85,1484.40 1975.00,1489.46 1975.15,1493.41 1975.30,1496.55 1975.45,1499.08 1975.60,1501.15 1975.75,1502.86 1975.90,1504.30 1976.05,1505.51 1976.20,1506.54 1976.35,1507.43 1976.50,1508.20 1976.65,1508.86 1976.80,1509.45 1976.95,1509.97 1977.10,1510.42 1977.25,1510.83 1977.40,1511.20 1977.90,1512.16 1978.40,1512.86 1978.90,1513.39 1979.40,1513.79 1979.90,1514.10 1980.40,1514.35 1980.90,1514.56 1981.40,1514.72 1981.90,1514.86 1982.40,1514.98 1982.90,1515.08 1983.40,1515.16 1983.90,1515.24 1984.40,1515.30 1984.90,1515.35 1985.40,1515.40 1986.90,1515.52 1988.40,1515.60 1989.90,1515.67 1991.40,1515.71 1992.90,1515.75 1994.40,1515.78 1995.90,1515.81 1997.40,1515.83 1998.90,1515.84 2000.40,1515.86 2001.90,1515.87 2003.40,1515.88 2007.40,1515.90 2011.40,1515.91 2015.40,1515.93 2019.40,1515.93 2023.40,1515.94 2027.40,1515.94 2031.40,1515.95 2035.40,1515.95 2039.40,1515.95 2043.40,1515.95 2047.40,1515.95 2051.40,1515.95 2055.40,1515.95 2059.40,1515.95 2063.40,1515.94 2064.90,1515.94 2066.40,1515.94 2067.90,1515.93 2069.40,1515.93 2070.90,1515.92 2072.40,1515.91 2073.90,1515.90 2075.40,1515.89 2076.90,1515.87 2078.40,1515.85 2078.90,1515.84 2079.40,1515.83 2079.90,1515.82 2080.40,1515.80 2080.90,1515.79 2081.40,1515.77 2081.90,1515.74 2082.40,1515.72 2082.90,1515.68 2083.40,1515.64 2083.90,1515.59 2084.40,1515.53 2084.90,1515.45 2085.40,1515.34 2085.90,1515.20 2086.40,1514.99 2086.55,1514.91 2086.70,1514.82 2086.85,1514.72 2087.00,1514.61 2087.15,1514.48 2087.30,1514.32 2087.45,1514.15 2087.60,1513.94 2087.75,1513.69 2087.90,1513.40 2088.05,1513.04 2088.20,1512.61 2088.35,1512.06 2088.50,1511.38 2088.65,1510.50 2088.80,1509.34 2088.85,1508.87 2088.90,1508.35 2088.95,1507.77 2089.00,1507.13 2089.05,1506.41 2089.10,1505.60 2089.15,1504.68 2089.20,1503.64 2089.25,1502.46 2089.30,1501.11 2089.35,1499.55 2089.40,1497.75 2089.45,1495.65 2089.50,1493.20 2089.55,1490.31 2089.60,1486.90 2089.65,1482.84 2089.70,1478.01 2089.75,1472.23 2089.80,1465.32 2089.85,1457.12 2089.90,1447.52 2089.95,1436.55 2090.00,1424.55 2090.05,1412.39 2090.10,1401.51 2090.15,1393.80 2090.20,1391.00 2090.25,1393.80 2090.30,1401.50 2090.35,1412.39 2090.40,1424.55 2090.45,1436.54 2090.50,1447.51 2090.55,1457.12 2090.60,1465.32 2090.65,1472.22 2090.70,1478.00 2090.75,1482.84 2090.80,1486.89 2090.85,1490.30 2090.90,1493.19 2090.95,1495.64 2091.00,1497.73 2091.05,1499.54 2091.10,1501.09 2091.15,1502.45 2091.20,1503.63 2091.25,1504.67 2091.30,1505.58 2091.35,1506.39 2091.40,1507.11 2091.45,1507.75 2091.50,1508.33 2091.55,1508.85 2091.60,1509.32 2091.65,1509.74 2091.70,1510.12 2091.85,1511.08 2092.00,1511.82 2092.15,1512.41 2092.30,1512.87 2092.45,1513.25 2092.60,1513.56 2092.75,1513.82 2092.90,1514.04 2093.05,1514.22 2093.20,1514.38 2093.35,1514.52 2093.50,1514.63 2093.65,1514.73 2093.80,1514.82 2093.95,1514.90 2094.10,1514.97 2094.25,1515.03 2094.75,1515.20 2095.25,1515.31 2095.75,1515.39 2096.25,1515.45 2096.75,1515.49 2097.25,1515.52 2097.75,1515.54 2098.25,1515.56 2098.75,1515.56 2099.25,1515.56 2099.75,1515.55 2100.25,1515.54 2100.75,1515.52 2101.25,1515.49 2101.75,1515.46 2102.25,1515.41 2102.75,1515.36 2103.25,1515.29 2103.75,1515.20 2104.25,1515.08 2104.75,1514.94 2105.25,1514.75 2105.75,1514.49 2106.25,1514.14 2106.75,1513.64 2106.90,1513.45 2107.05,1513.23 2107.20,1512.98 2107.35,1512.69 2107.50,1512.37 2107.65,1511.99 2107.80,1511.54 2107.95,1511.02 2108.10,1510.40 2108.25,1509.65 2108.40,1508.75 2108.55,1507.63 2108.70,1506.23 2108.85,1504.46 2109.00,1502.16 2109.05,1501.24 2109.10,1500.23 2109.15,1499.11 2109.20,1497.87 2109.25,1496.49 2109.30,1494.95 2109.35,1493.23 2109.40,1491.29 2109.45,1489.10 2109.50,1486.62 2109.55,1483.79 2109.60,1480.55 2109.65,1476.83 2109.70,1472.52 2109.75,1467.51 2109.80,1461.64 2109.85,1454.75 2109.90,1446.59 2109.95,1436.89 2110.00,1425.33 2110.05,1411.51 2110.10,1395.00 2110.15,1375.40 2110.20,1352.43 2110.25,1326.20 2110.30,1297.53 2110.35,1268.44 2110.40,1242.42 2110.45,1224.00 2110.50,1217.30 2110.55,1224.00 2110.60,1242.42 2110.65,1268.44 2110.70,1297.53 2110.75,1326.20 2110.80,1352.44 2110.85,1375.40 2110.90,1395.00 2110.95,1411.51 2111.00,1425.33 2111.05,1436.90 2111.10,1446.59 2111.15,1454.75 2111.20,1461.65 2111.25,1467.51 2111.30,1472.53 2111.35,1476.83 2111.40,1480.56 2111.45,1483.80 2111.50,1486.62 2111.55,1489.11 2111.60,1491.29 2111.65,1493.23 2111.70,1494.96 2111.75,1496.50 2111.80,1497.88 2111.85,1499.12 2111.90,1500.23 2111.95,1501.25 2112.00,1502.17 2112.15,1504.47 2112.30,1506.24 2112.45,1507.64 2112.60,1508.76 2112.75,1509.67 2112.90,1510.42 2113.05,1511.04 2113.20,1511.56 2113.35,1512.01 2113.50,1512.39 2113.65,1512.72 2113.80,1513.00 2113.95,1513.25 2114.10,1513.47 2114.25,1513.67 2114.40,1513.84 2114.55,1513.99 2115.05,1514.40 2115.55,1514.69 2116.05,1514.91 2116.55,1515.08 2117.05,1515.21 2117.55,1515.31 2118.05,1515.40 2118.55,1515.47 2119.05,1515.52 2119.55,1515.57 2120.05,1515.61 2120.55,1515.65 2121.05,1515.68 2121.55,1515.70 2122.05,1515.73 2122.55,1515.75 2124.05,1515.80 2125.55,1515.83 2127.05,1515.86 2128.55,1515.88 2130.05,1515.89 2131.55,1515.90 2133.05,1515.91 2134.55,1515.92 2136.05,1515.93 2137.55,1515.93 2139.05,1515.94 2140.55,1515.94 2144.55,1515.95 2148.55,1515.96 2152.55,1515.96 2156.55,1515.97 2160.55,1515.97 2164.55,1515.97 2168.55,1515.97 2172.55,1515.97 2176.55,1515.97 2180.55,1515.97 2184.55,1515.97 2188.55,1515.97 2192.55,1515.97 2194.05,1515.97 2195.55,1515.97 2197.05,1515.97 2198.55,1515.97 2200.05,1515.96 2201.55,1515.96 2203.05,1515.96 2204.55,1515.96 2206.05,1515.95 2207.55,1515.94 2209.05,1515.94 2209.55,1515.93 2210.05,1515.93 2210.55,1515.93 2211.05,1515.92 2211.55,1515.92 2212.05,1515.91 2212.55,1515.90 2213.05,1515.89 2213.55,1515.88 2214.05,1515.87 2214.55,1515.85 2215.05,1515.83 2215.55,1515.81 2216.05,1515.78 2216.55,1515.73 2217.05,1515.67 2217.20,1515.65 2217.35,1515.62 2217.50,1515.59 2217.65,1515.56 2217.80,1515.52 2217.95,1515.48 2218.10,1515.43 2218.25,1515.37 2218.40,1515.30 2218.55,1515.22 2218.70,1515.12 2218.85,1515.01 2219.00,1514.86 2219.15,1514.68 2219.30,1514.46 2219.45,1514.17 2219.60,1513.78 2219.65,1513.62 2219.70,1513.45 2219.75,1513.26 2219.80,1513.04 2219.85,1512.80 2219.90,1512.52 2219.95,1512.21 2220.00,1511.86 2220.05,1511.46 2220.10,1510.99 2220.15,1510.45 2220.20,1509.83 2220.25,1509.10 2220.30,1508.23 2220.35,1507.20 2220.40,1505.97 2220.45,1504.49 2220.50,1502.69 2220.55,1500.49 2220.60,1497.81 2220.65,1494.51 2220.70,1490.51 2220.75,1485.74 2220.80,1480.27 2220.85,1474.41 2220.90,1468.89 2220.95,1464.82 2221.00,1463.30 2221.05,1464.82 2221.10,1468.89 2221.15,1474.41 2221.20,1480.27 2221.25,1485.74 2221.30,1490.51 2221.35,1494.51 2221.40,1497.80 2221.45,1500.49 2221.50,1502.69 2221.55,1504.49 2221.60,1505.97 2221.65,1507.20 2221.70,1508.22 2221.75,1509.09 2221.80,1509.82 2221.85,1510.45 2221.90,1510.98 2221.95,1511.45 2222.00,1511.85 2222.05,1512.20 2222.10,1512.51 2222.15,1512.79 2222.20,1513.03 2222.25,1513.24 2222.30,1513.44 2222.35,1513.61 2222.40,1513.77 2222.45,1513.91 2222.50,1514.03 2222.65,1514.35 2222.80,1514.60 2222.95,1514.79 2223.10,1514.94 2223.25,1515.07 2223.40,1515.17 2223.55,1515.25 2223.70,1515.32 2223.85,1515.38 2224.00,1515.43 2224.15,1515.48 2224.30,1515.51 2224.45,1515.55 2224.60,1515.58 2224.75,1515.60 2224.90,1515.62 2225.05,1515.64 2225.55,1515.69 2226.05,1515.73 2226.55,1515.75 2227.05,1515.77 2227.55,1515.78 2228.05,1515.78 2228.55,1515.78 2229.05,1515.78 2229.55,1515.78 2230.05,1515.77 2230.55,1515.76 2231.05,1515.75 2231.55,1515.73 2232.05,1515.71 2232.55,1515.68 2233.05,1515.65 2233.55,1515.61 2234.05,1515.56 2234.55,1515.49 2235.05,1515.41 2235.55,1515.31 2236.05,1515.17 2236.55,1514.98 2237.05,1514.72 2237.20,1514.62 2237.35,1514.51 2237.50,1514.38 2237.65,1514.23 2237.80,1514.07 2237.95,1513.88 2238.10,1513.66 2238.25,1513.40 2238.40,1513.10 2238.55,1512.74 2238.70,1512.31 2238.85,1511.80 2239.00,1511.16 2239.15,1510.36 2239.30,1509.36 2239.45,1508.06 2239.60,1506.35 2239.65,1505.66 2239.70,1504.89 2239.75,1504.03 2239.80,1503.07 2239.85,1501.99 2239.90,1500.77 2239.95,1499.39 2240.00,1497.83 2240.05,1496.03 2240.10,1493.97 2240.15,1491.58 2240.20,1488.80 2240.25,1485.55 2240.30,1481.70 2240.35,1477.14 2240.40,1471.67 2240.45,1465.08 2240.50,1457.08 2240.55,1447.32 2240.60,1435.37 2240.65,1420.73 2240.70,1402.95 2240.75,1381.75 2240.80,1357.42 2240.85,1331.39 2240.90,1306.86 2240.95,1288.75 2241.00,1282.00 2241.05,1288.75 2241.10,1306.87 2241.15,1331.39 2241.20,1357.42 2241.25,1381.75 2241.30,1402.95 2241.35,1420.73 2241.40,1435.37 2241.45,1447.32 2241.50,1457.08 2241.55,1465.08 2241.60,1471.67 2241.65,1477.14 2241.70,1481.70 2241.75,1485.55 2241.80,1488.80 2241.85,1491.58 2241.90,1493.97 2241.95,1496.03 2242.00,1497.83 2242.05,1499.40 2242.10,1500.77 2242.15,1501.99 2242.20,1503.07 2242.25,1504.03 2242.30,1504.89 2242.35,1505.66 2242.40,1506.35 2242.45,1506.98 2242.50,1507.55 2242.65,1508.97 2242.80,1510.06 2242.95,1510.92 2243.10,1511.60 2243.25,1512.16 2243.40,1512.61 2243.55,1512.99 2243.70,1513.31 2243.85,1513.58 2244.00,1513.82 2244.15,1514.02 2244.30,1514.19 2244.45,1514.34 2244.60,1514.47 2244.75,1514.59 2244.90,1514.70 2245.05,1514.79 2245.55,1515.04 2246.05,1515.21 2246.55,1515.35 2247.05,1515.45 2247.55,1515.53 2248.05,1515.59 2248.55,1515.64 2249.05,1515.68 2249.55,1515.72 2250.05,1515.75 2250.55,1515.77 2251.05,1515.79 2251.55,1515.81 2252.05,1515.82 2252.55,1515.84 2253.05,1515.85 2254.55,1515.88 2256.05,1515.90 2257.55,1515.92 2259.05,1515.93 2260.55,1515.94 2262.05,1515.94 2263.55,1515.95 2265.05,1515.95 2266.55,1515.96 2268.05,1515.96 2269.55,1515.97 2271.05,1515.97 2275.05,1515.97 2279.05,1515.98 2283.05,1515.98 2287.05,1515.98 2291.05,1515.98 2295.05,1515.98 2299.05,1515.98 2303.05,1515.99 2307.05,1515.99 2311.05,1515.99 2315.05,1515.99 2319.05,1515.99 2320.55,1515.99 2322.05,1515.98 2323.55,1515.98 2325.05,1515.98 2326.55,1515.98 2328.05,1515.98 2329.55,1515.98 2331.05,1515.98 2332.55,1515.98 2334.05,1515.97 2334.55,1515.97 2335.05,1515.97 2335.55,1515.97 2336.05,1515.97 2336.55,1515.96 2337.05,1515.96 2337.55,1515.96 2338.05,1515.95 2338.55,1515.95 2339.05,1515.94 2339.55,1515.93 2340.05,1515.92 2340.55,1515.91 2341.05,1515.89 2341.55,1515.87 2341.70,1515.86 2341.85,1515.85 2342.00,1515.84 2342.15,1515.82 2342.30,1515.81 2342.45,1515.79 2342.60,1515.77 2342.75,1515.75 2342.90,1515.72 2343.05,1515.68 2343.20,1515.64 2343.35,1515.59 2343.50,1515.53 2343.65,1515.46 2343.80,1515.37 2343.95,1515.24 2344.10,1515.08 2344.15,1515.02 2344.20,1514.94 2344.25,1514.86 2344.30,1514.77 2344.35,1514.67 2344.40,1514.55 2344.45,1514.42 2344.50,1514.27 2344.55,1514.09 2344.60,1513.89 2344.65,1513.66 2344.70,1513.39 2344.75,1513.06 2344.80,1512.68 2344.85,1512.22 2344.90,1511.67 2344.95,1510.99 2345.00,1510.15 2345.05,1509.10 2345.10,1507.79 2345.15,1506.12 2345.20,1504.02 2345.25,1501.39 2345.30,1498.19 2345.35,1494.52 2345.40,1490.83 2345.45,1487.92 2345.50,1486.80 2345.55,1487.92 2345.60,1490.83 2345.65,1494.52 2345.70,1498.19 2345.75,1501.39 2345.80,1504.02 2345.85,1506.12 2345.90,1507.78 2345.95,1509.10 2346.00,1510.15 2346.05,1510.98 2346.10,1511.66 2346.15,1512.22 2346.20,1512.68 2346.25,1513.06 2346.30,1513.39 2346.35,1513.66 2346.40,1513.89 2346.45,1514.09 2346.50,1514.26 2346.55,1514.42 2346.60,1514.55 2346.65,1514.66 2346.70,1514.77 2346.75,1514.86 2346.80,1514.94 2346.85,1515.01 2346.90,1515.08 2346.95,1515.14 2347.00,1515.19 2347.15,1515.33 2347.30,1515.43 2347.45,1515.51 2347.60,1515.57 2347.75,1515.62 2347.90,1515.67 2348.05,1515.70 2348.20,1515.73 2348.35,1515.76 2348.50,1515.78 2348.65,1515.80 2348.80,1515.81 2348.95,1515.83 2349.10,1515.84 2349.25,1515.85 2349.40,1515.86 2349.55,1515.87 2350.05,1515.89 2350.55,1515.90 2351.05,1515.91 2351.55,1515.92 2352.05,1515.93 2352.55,1515.93 2353.05,1515.94 2353.55,1515.94 2354.05,1515.94 2354.55,1515.94 2355.05,1515.94 2355.55,1515.94 2356.05,1515.93 2356.55,1515.93 2357.05,1515.92 2357.55,1515.92 2358.05,1515.91 2358.55,1515.90 2359.05,1515.89 2359.55,1515.87 2360.05,1515.85 2360.55,1515.83 2361.05,1515.79 2361.55,1515.74 2361.70,1515.72 2361.85,1515.70 2362.00,1515.67 2362.15,1515.64 2362.30,1515.61 2362.45,1515.57 2362.60,1515.53 2362.75,1515.48 2362.90,1515.42 2363.05,1515.35 2363.20,1515.26 2363.35,1515.16 2363.50,1515.03 2363.65,1514.88 2363.80,1514.68 2363.95,1514.42 2364.10,1514.07 2364.15,1513.93 2364.20,1513.78 2364.25,1513.60 2364.30,1513.41 2364.35,1513.19 2364.40,1512.94 2364.45,1512.66 2364.50,1512.34 2364.55,1511.97 2364.60,1511.55 2364.65,1511.05 2364.70,1510.47 2364.75,1509.79 2364.80,1508.98 2364.85,1508.00 2364.90,1506.82 2364.95,1505.37 2365.00,1503.59 2365.05,1501.37 2365.10,1498.58 2365.15,1495.05 2365.20,1490.58 2365.25,1484.99 2365.30,1478.19 2365.35,1470.41 2365.40,1462.55 2365.45,1456.38 2365.50,1454.00 2365.55,1456.38 2365.60,1462.55 2365.65,1470.41 2365.70,1478.19 2365.75,1484.99 2365.80,1490.58 2365.85,1495.05 2365.90,1498.58 2365.95,1501.37 2366.00,1503.59 2366.05,1505.37 2366.10,1506.82 2366.15,1508.00 2366.20,1508.98 2366.25,1509.79 2366.30,1510.47 2366.35,1511.05 2366.40,1511.55 2366.45,1511.97 2366.50,1512.34 2366.55,1512.66 2366.60,1512.94 2366.65,1513.19 2366.70,1513.41 2366.75,1513.60 2366.80,1513.78 2366.85,1513.93 2366.90,1514.07 2366.95,1514.20 2367.00,1514.31 2367.15,1514.60 2367.30,1514.82 2367.45,1514.99 2367.60,1515.12 2367.75,1515.23 2367.90,1515.32 2368.05,1515.40 2368.20,1515.46 2368.35,1515.52 2368.50,1515.56 2368.65,1515.60 2368.80,1515.64 2368.95,1515.67 2369.10,1515.69 2369.25,1515.72 2369.40,1515.74 2369.55,1515.75 2370.05,1515.80 2370.55,1515.84 2371.05,1515.86 2371.55,1515.88 2372.05,1515.90 2372.55,1515.91 2373.05,1515.92 2373.55,1515.93 2374.05,1515.94 2374.55,1515.94 2375.05,1515.95 2375.55,1515.95 2376.05,1515.96 2376.55,1515.96 2377.05,1515.96 2377.55,1515.96 2379.05,1515.97 2380.55,1515.97 2382.05,1515.98 2383.55,1515.98 2385.05,1515.98 2386.55,1515.98 2388.05,1515.99 2389.55,1515.99 2391.05,1515.99 2392.55,1515.99 2394.05,1515.99 2395.55,1515.99 2399.55,1515.99 2403.55,1515.99 2407.55,1515.99 2411.55,1515.99 2415.55,1515.99 2419.55,1515.99 2423.55,1515.99 2427.55,1515.99 2431.55,1515.99 2435.55,1515.99 2437.05,1515.99 2438.55,1515.99 2440.05,1515.99 2441.55,1515.99 2443.05,1515.99 2444.55,1515.99 2446.05,1515.99 2447.55,1515.99 2449.05,1515.99 2450.55,1515.99 2452.05,1515.99 2452.55,1515.99 2453.05,1515.99 2453.55,1515.99 2454.05,1515.99 2454.55,1515.98 2455.05,1515.98 2455.55,1515.98 2456.05,1515.98 2456.55,1515.98 2457.05,1515.98 2457.55,1515.97 2458.05,1515.97 2458.55,1515.96 2459.05,1515.96 2459.55,1515.95 2459.70,1515.94 2459.85,1515.94 2460.00,1515.93 2460.15,1515.93 2460.30,1515.92 2460.45,1515.91 2460.60,1515.90 2460.75,1515.89 2460.90,1515.88 2461.05,1515.86 2461.20,1515.84 2461.35,1515.82 2461.50,1515.79 2461.65,1515.75 2461.80,1515.69 2461.85,1515.67 2461.90,1515.65 2461.95,1515.62 2462.00,1515.59 2462.05,1515.56 2462.10,1515.52 2462.15,1515.47 2462.20,1515.42 2462.25,1515.36 2462.30,1515.29 2462.35,1515.22 2462.40,1515.12 2462.45,1515.01 2462.50,1514.88 2462.55,1514.72 2462.60,1514.52 2462.65,1514.27 2462.70,1513.97 2462.75,1513.58 2462.80,1513.08 2462.85,1512.42 2462.90,1511.55 2462.95,1510.41 2463.00,1508.92 2463.05,1507.06 2463.10,1504.99 2463.15,1503.22 2463.20,1502.50 2463.25,1503.22 2463.30,1504.99 2463.35,1507.06 2463.40,1508.92 2463.45,1510.41 2463.50,1511.55 2463.55,1512.42 2463.60,1513.08 2463.65,1513.58 2463.70,1513.97 2463.75,1514.27 2463.80,1514.52 2463.85,1514.72 2463.90,1514.88 2463.95,1515.01 2464.00,1515.12 2464.05,1515.21 2464.10,1515.29 2464.15,1515.36 2464.20,1515.42 2464.25,1515.47 2464.30,1515.52 2464.35,1515.55 2464.40,1515.59 2464.45,1515.62 2464.50,1515.65 2464.55,1515.67 2464.60,1515.69 2464.65,1515.71 2464.70,1515.73 2464.85,1515.78 2465.00,1515.81 2465.15,1515.84 2465.30,1515.86 2465.45,1515.87 2465.60,1515.89 2465.75,1515.90 2465.90,1515.91 2466.05,1515.92 2466.20,1515.92 2466.35,1515.93 2466.50,1515.93 2466.65,1515.94 2466.80,1515.94 2466.95,1515.95 2467.10,1515.95 2467.25,1515.95 2467.75,1515.96 2468.25,1515.96 2468.75,1515.97 2469.25,1515.97 2469.75,1515.97 2470.25,1515.97 2470.75,1515.97 2471.25,1515.97 2471.75,1515.97 2472.25,1515.97 2472.75,1515.97 2473.25,1515.97 2473.75,1515.97 2474.25,1515.97 2474.75,1515.97 2475.25,1515.97 2475.75,1515.96 2476.25,1515.96 2476.75,1515.95 2477.25,1515.95 2477.75,1515.94 2478.25,1515.93 2478.75,1515.92 2479.25,1515.90 2479.75,1515.87 2479.90,1515.87 2480.05,1515.85 2480.20,1515.84 2480.35,1515.83 2480.50,1515.81 2480.65,1515.79 2480.80,1515.77 2480.95,1515.74 2481.10,1515.71 2481.25,1515.68 2481.40,1515.63 2481.55,1515.58 2481.70,1515.51 2481.85,1515.43 2482.00,1515.32 2482.15,1515.17 2482.20,1515.12 2482.25,1515.05 2482.30,1514.98 2482.35,1514.90 2482.40,1514.81 2482.45,1514.71 2482.50,1514.59 2482.55,1514.46 2482.60,1514.31 2482.65,1514.14 2482.70,1513.93 2482.75,1513.70 2482.80,1513.42 2482.85,1513.09 2482.90,1512.70 2482.95,1512.22 2483.00,1511.64 2483.05,1510.92 2483.10,1510.01 2483.15,1508.86 2483.20,1507.37 2483.25,1505.43 2483.30,1502.87 2483.35,1499.49 2483.40,1495.07 2483.45,1489.58 2483.50,1483.47 2483.55,1478.24 2483.60,1476.10 2483.65,1478.24 2483.70,1483.47 2483.75,1489.58 2483.80,1495.07 2483.85,1499.49 2483.90,1502.87 2483.95,1505.43 2484.00,1507.37 2484.05,1508.86 2484.10,1510.01 2484.15,1510.92 2484.20,1511.64 2484.25,1512.22 2484.30,1512.70 2484.35,1513.09 2484.40,1513.42 2484.45,1513.70 2484.50,1513.93 2484.55,1514.14 2484.60,1514.31 2484.65,1514.46 2484.70,1514.59 2484.75,1514.71 2484.80,1514.81 2484.85,1514.90 2484.90,1514.98 2484.95,1515.05 2485.00,1515.12 2485.05,1515.17 2485.10,1515.23 2485.25,1515.36 2485.40,1515.46 2485.55,1515.54 2485.70,1515.60 2485.85,1515.65 2486.00,1515.69 2486.15,1515.73 2486.30,1515.75 2486.45,1515.78 2486.60,1515.80 2486.75,1515.82 2486.90,1515.83 2487.05,1515.85 2487.20,1515.86 2487.35,1515.87 2487.50,1515.88 2487.65,1515.89 2488.15,1515.91 2488.65,1515.93 2489.15,1515.94 2489.65,1515.95 2490.15,1515.95 2490.65,1515.96 2491.15,1515.96 2491.65,1515.97 2492.15,1515.97 2492.65,1515.97 2493.15,1515.98 2493.65,1515.98 2494.15,1515.98 2494.65,1515.98 2495.15,1515.98 2495.65,1515.98 2497.15,1515.99 2498.65,1515.99 2500.15,1515.99 2501.65,1515.99 2503.15,1515.99 2504.65,1515.99 2506.15,1515.99 2507.65,1515.99 2509.15,1515.99 2510.65,1515.99 2512.15,1515.99 2513.65,1515.99 2517.65,1515.99 2521.65,1515.99 2525.65,1515.99 2529.65,1516.00 2533.65,1516.00 2537.65,1516.00 2541.65,1516.00 2545.65,1516.00 2547.15,1516.00 2548.65,1516.00 2550.15,1516.00 2551.65,1516.00 2553.15,1516.00 2554.65,1516.00 2556.15,1516.00 2557.65,1516.00 2559.15,1515.99 2560.65,1515.99 2562.15,1515.99 2563.65,1515.99 2564.15,1515.99 2564.65,1515.99 2565.15,1515.99 2565.65,1515.99 2566.15,1515.99 2566.65,1515.99 2567.15,1515.99 2567.65,1515.99 2568.15,1515.99 2568.65,1515.99 2569.15,1515.99 2569.65,1515.98 2570.15,1515.98 2570.65,1515.98 2570.80,1515.98 2570.95,1515.98 2571.10,1515.97 2571.25,1515.97 2571.40,1515.97 2571.55,1515.97 2571.70,1515.96 2571.85,1515.96 2572.00,1515.95 2572.15,1515.95 2572.30,1515.94 2572.45,1515.93 2572.60,1515.92 2572.75,1515.91 2572.90,1515.90 2573.05,1515.87 2573.10,1515.87 2573.15,1515.86 2573.20,1515.85 2573.25,1515.83 2573.30,1515.82 2573.35,1515.80 2573.40,1515.79 2573.45,1515.77 2573.50,1515.74 2573.55,1515.72 2573.60,1515.69 2573.65,1515.65 2573.70,1515.61 2573.75,1515.56 2573.80,1515.50 2573.85,1515.43 2573.90,1515.34 2573.95,1515.22 2574.00,1515.08 2574.05,1514.89 2574.10,1514.65 2574.15,1514.32 2574.20,1513.88 2574.25,1513.27 2574.30,1512.42 2574.35,1511.28 2574.40,1509.89 2574.45,1508.57 2574.50,1508.00 2574.55,1508.57 2574.60,1509.89 2574.65,1511.28 2574.70,1512.42 2574.75,1513.27 2574.80,1513.88 2574.85,1514.32 2574.90,1514.65 2574.95,1514.89 2575.00,1515.08 2575.05,1515.22 2575.10,1515.34 2575.15,1515.43 2575.20,1515.50 2575.25,1515.56 2575.30,1515.61 2575.35,1515.65 2575.40,1515.69 2575.45,1515.72 2575.50,1515.74 2575.55,1515.77 2575.60,1515.79 2575.65,1515.80 2575.70,1515.82 2575.75,1515.83 2575.80,1515.85 2575.85,1515.86 2575.90,1515.87 2575.95,1515.87 2576.00,1515.88 2576.15,1515.90 2576.30,1515.92 2576.45,1515.93 2576.60,1515.94 2576.75,1515.94 2576.90,1515.95 2577.05,1515.96 2577.20,1515.96 2577.35,1515.96 2577.50,1515.97 2577.65,1515.97 2577.80,1515.97 2577.95,1515.97 2578.10,1515.98 2578.25,1515.98 2578.40,1515.98 2578.55,1515.98 2579.05,1515.98 2579.55,1515.98 2580.05,1515.99 2580.55,1515.99 2581.05,1515.99 2581.55,1515.99 2582.05,1515.99 2582.55,1515.99 2583.05,1515.99 2583.55,1515.99 2584.05,1515.99 2584.55,1515.99 2585.05,1515.99 2585.55,1515.99 2586.05,1515.99 2586.55,1515.99 2587.05,1515.99 2587.55,1515.99 2588.05,1515.99 2588.55,1515.99 2589.05,1515.99 2589.55,1515.99 2590.05,1515.98 2590.55,1515.98 2591.05,1515.98 2591.55,1515.97 2591.70,1515.97 2591.85,1515.97 2592.00,1515.96 2592.15,1515.96 2592.30,1515.96 2592.45,1515.95 2592.60,1515.95 2592.75,1515.94 2592.90,1515.94 2593.05,1515.93 2593.20,1515.92 2593.35,1515.91 2593.50,1515.89 2593.65,1515.87 2593.80,1515.85 2593.85,1515.84 2593.90,1515.82 2593.95,1515.81 2594.00,1515.80 2594.05,1515.78 2594.10,1515.76 2594.15,1515.74 2594.20,1515.72 2594.25,1515.69 2594.30,1515.66 2594.35,1515.63 2594.40,1515.59 2594.45,1515.54 2594.50,1515.49 2594.55,1515.42 2594.60,1515.34 2594.65,1515.24 2594.70,1515.12 2594.75,1514.97 2594.80,1514.78 2594.85,1514.53 2594.90,1514.21 2594.95,1513.78 2595.00,1513.19 2595.05,1512.38 2595.10,1511.25 2595.15,1509.74 2595.20,1507.90 2595.25,1506.16 2595.30,1505.40 2595.35,1506.16 2595.40,1507.90 2595.45,1509.74 2595.50,1511.25 2595.55,1512.38 2595.60,1513.19 2595.65,1513.78 2595.70,1514.21 2595.75,1514.53 2595.80,1514.78 2595.85,1514.97 2595.90,1515.12 2595.95,1515.24 2596.00,1515.34 2596.05,1515.42 2596.10,1515.49 2596.15,1515.54 2596.20,1515.59 2596.25,1515.63 2596.30,1515.66 2596.35,1515.69 2596.40,1515.72 2596.45,1515.74 2596.50,1515.76 2596.55,1515.78 2596.60,1515.80 2596.65,1515.81 2596.70,1515.82 2596.75,1515.84 2596.80,1515.85 2596.95,1515.87 2597.10,1515.89 2597.25,1515.91 2597.40,1515.92 2597.55,1515.93 2597.70,1515.94 2597.85,1515.94 2598.00,1515.95 2598.15,1515.95 2598.30,1515.96 2598.45,1515.96 2598.60,1515.96 2598.75,1515.97 2598.90,1515.97 2599.05,1515.97 2599.20,1515.97 2599.35,1515.98 2599.85,1515.98 2600.35,1515.98 2600.85,1515.99 2601.35,1515.99 2601.85,1515.99 2602.35,1515.99 2602.85,1515.99 2603.35,1515.99 2603.85,1515.99 2604.35,1515.99 2604.85,1515.99 2605.35,1515.99 2605.85,1515.99 2606.35,1515.99 2606.85,1515.99 2607.35,1515.99 2608.85,1515.99 2610.35,1516.00 2611.85,1516.00 2613.35,1516.00 2614.85,1516.00 2616.35,1516.00 2617.85,1516.00 2619.35,1516.00 2620.85,1516.00 2622.35,1516.00 2623.85,1516.00 2625.35,1516.00 2629.35,1516.00 2633.35,1516.00 2637.35,1516.00 2641.35,1516.00 2645.35,1516.00 2649.35,1516.00 2653.35,1516.00 2657.35,1516.00 2661.35,1516.00 2665.35,1516.00 2667.00,1516.00" fill="none" stroke="#f5d347" stroke-width="1.6" stroke-linejoin="round" stroke-linecap="round"/>
<path d="M177.53 84.50 L654.97 84.50 C670.81 84.50 678.74 84.50 687.27 87.20 C696.58 90.59 703.91 97.92 707.30 107.23 C710.00 115.76 710.00 123.69 710.00 139.53 L710.00 1594.47 C710.00 1610.31 710.00 1618.24 707.30 1626.77 C703.91 1636.08 696.58 1643.41 687.27 1646.80 C678.74 1649.50 670.81 1649.50 654.97 1649.50 L177.53 1649.50 C161.69 1649.50 153.76 1649.50 145.23 1646.80 C135.92 1643.41 128.59 1636.08 125.20 1626.77 C122.50 1618.24 122.50 1610.31 122.50 1594.47 L122.50 139.53 C122.50 123.69 122.50 115.76 125.20 107.23 C128.59 97.92 135.92 90.59 145.23 87.20 C153.76 84.50 161.69 84.50 177.53 84.50 Z" fill="url(#sbg)" stroke="#3e3e3e" stroke-width="2"/>
<circle cx="155.8" cy="116.3" r="13.9" fill="#0c0c0c"/>
<circle cx="155.8" cy="116.3" r="13.1" fill="#ed6666" stroke="#c94a4a" stroke-width="0.9"/>
<circle cx="199.4" cy="116.3" r="13.9" fill="#0c0c0c"/>
<circle cx="199.4" cy="116.3" r="13.1" fill="#f4c745" stroke="#d6a732" stroke-width="0.9"/>
<circle cx="243.4" cy="116.3" r="13.9" fill="#0c0c0c"/>
<circle cx="243.4" cy="116.3" r="13.1" fill="#64c465" stroke="#4ca64e" stroke-width="0.9"/>
<g fill="none" stroke="#f2f2f2" stroke-width="3"><rect x="648.6" y="103.7" width="34.2" height="25.2" rx="5.6"/><line x1="660.6" y1="104" x2="660.6" y2="128.6"/></g>
<g stroke="#e8e8e8" stroke-width="2" stroke-linecap="round"><line x1="652.9" y1="109.8" x2="656.6" y2="109.8"/><line x1="652.9" y1="113.8" x2="656.6" y2="113.8"/><line x1="652.9" y1="117.8" x2="656.6" y2="117.8"/></g>
<rect x="124.00" y="164.00" width="585.00" height="164.00" rx="26.00" fill="#212121" />
<text x="282.02" y="196.90" font-size="25.00" fill="#dedede" textLength="268.70" lengthAdjust="spacingAndGlyphs"  stroke="#dedede" stroke-width="0.50">CHEMICAL SELECTION</text>
<text x="130.17" y="247.30" font-size="25.00" fill="#f0f0f0" textLength="219.90" lengthAdjust="spacingAndGlyphs"  stroke="#f0f0f0" stroke-width="0.50">Enter CAS number:</text>
<rect x="360.70" y="210.90" width="345.90" height="54.50" rx="21.00" fill="#3a6797" />
<rect x="367.00" y="217.60" width="333.40" height="41.40" rx="14.00" fill="#343434" />
<text x="376.55" y="247.30" font-size="25.00" fill="#f0f0f0" textLength="124.26" lengthAdjust="spacingAndGlyphs"  stroke="#f0f0f0" stroke-width="0.50">7647-01-0</text>
<rect x="499.60" y="224.20" width="3.50" height="28.40" rx="1.70" fill="#2f6fd8" />
<text x="131.04" y="306.30" font-size="25.00" fill="#e6e6e6" textLength="81.13" lengthAdjust="spacingAndGlyphs"  stroke="#e6e6e6" stroke-width="0.50">Select:</text>
<rect x="233.00" y="276.20" width="468.00" height="43.00" rx="12.00" fill="#343434" />
<text x="254.80" y="306.30" font-size="25.00" fill="#f0f0f0" textLength="213.12" lengthAdjust="spacingAndGlyphs"  stroke="#f0f0f0" stroke-width="0.50">Hydrogen chloride</text>
<path d="M671.6 296 L678 289.8 L684.4 296 M671.6 301 L678 307.2 L684.4 301" fill="none" stroke="#f6f6f6" stroke-width="2.7" stroke-linecap="round" stroke-linejoin="round"/>
<rect x="123.00" y="344.00" width="585.00" height="1156.00" rx="26.00" fill="#1c1c1c" />
<text x="277.17" y="384.30" font-size="25.00" fill="#f0f0f0" textLength="276.67" lengthAdjust="spacingAndGlyphs"  stroke="#f0f0f0" stroke-width="0.50">SPECTRUM STATISTICS</text>
<text x="181.49" y="435.90" font-size="25.00" fill="#d2d2d2" textLength="402.86" lengthAdjust="spacingAndGlyphs"  stroke="#d2d2d2" stroke-width="0.40">Chemical name: Hydrogen chloride</text>
<text x="181.48" y="474.20" font-size="25.00" fill="#d2d2d2" textLength="281.74" lengthAdjust="spacingAndGlyphs"  stroke="#d2d2d2" stroke-width="0.40">CAS number: 7647-01-0</text>
<text x="181.49" y="512.50" font-size="25.00" fill="#d2d2d2" textLength="257.23" lengthAdjust="spacingAndGlyphs"  stroke="#d2d2d2" stroke-width="0.40">Chemical formula: HCl</text>
<text x="180.64" y="550.80" font-size="25.00" fill="#d2d2d2" textLength="469.91" lengthAdjust="spacingAndGlyphs"  stroke="#d2d2d2" stroke-width="0.40">Molecular weight (grams/mole): 36.4609</text>
<text x="180.66" y="589.10" font-size="25.00" fill="#d2d2d2" textLength="304.91" lengthAdjust="spacingAndGlyphs"  stroke="#d2d2d2" stroke-width="0.40">Melting point (°C): -114.24</text>
<text x="180.61" y="627.40" font-size="25.00" fill="#d2d2d2" textLength="290.86" lengthAdjust="spacingAndGlyphs"  stroke="#d2d2d2" stroke-width="0.40">Boiling point (°C): -85.06</text>
<text x="182.69" y="665.70" font-size="25.00" fill="#d2d2d2" textLength="463.30" lengthAdjust="spacingAndGlyphs"  stroke="#d2d2d2" stroke-width="0.40">Vapor pressure (mmHg @ 25 °C): P&gt;760</text>
<text x="180.64" y="704.00" font-size="25.00" fill="#d2d2d2" textLength="432.09" lengthAdjust="spacingAndGlyphs"  stroke="#d2d2d2" stroke-width="0.40">Number of points in spectrum: 97902</text>
<rect x="271.00" y="724.00" width="291.50" height="42.70" rx="12.00" fill="#2b2b2b" />
<text x="293.42" y="754.90" font-size="25.00" fill="#ececec" textLength="246.52" lengthAdjust="spacingAndGlyphs"  stroke="#ececec" stroke-width="0.50">Chemical Description</text>
<rect x="131.40" y="782.00" width="569.60" height="1.50" rx="0.00" fill="#303030" />
<rect x="132.00" y="798.00" width="569.00" height="340.00" rx="28.00" fill="#202020" />
<text x="292.53" y="831.30" font-size="25.00" fill="#e4e4e4" textLength="248.31" lengthAdjust="spacingAndGlyphs"  stroke="#e4e4e4" stroke-width="0.50">Y-AXIS PARAMETERS</text>
<text x="154.69" y="882.30" font-size="25.00" fill="#ececec" textLength="317.46" lengthAdjust="spacingAndGlyphs"  stroke="#ececec" stroke-width="0.50">Enter Concentration (ppm):</text>
<rect x="487.00" y="851.30" width="189.70" height="42.70" rx="12.00" fill="#323232" />
<text x="496.43" y="882.30" font-size="25.00" fill="#ececec" textLength="33.26" lengthAdjust="spacingAndGlyphs"  stroke="#ececec" stroke-width="0.50">1.0</text>
<text x="156.69" y="940.30" font-size="25.00" fill="#ececec" textLength="313.47" lengthAdjust="spacingAndGlyphs"  stroke="#ececec" stroke-width="0.50">Enter path length (meters):</text>
<rect x="485.00" y="909.80" width="189.70" height="42.90" rx="12.00" fill="#323232" />
<text x="494.43" y="940.30" font-size="25.00" fill="#ececec" textLength="33.26" lengthAdjust="spacingAndGlyphs"  stroke="#ececec" stroke-width="0.50">1.0</text>
<rect x="176.00" y="967.80" width="235.00" height="42.80" rx="12.00" fill="#2c2c2c" />
<rect x="198.70" y="974.60" width="190.30" height="29.00" rx="0.00" fill="#428ef5" />
<text x="245.56" y="998.30" font-size="25.00" fill="#ffffff" textLength="95.09" lengthAdjust="spacingAndGlyphs"  stroke="#ffffff" stroke-width="0.50">Base-10</text>
<rect x="421.30" y="967.80" width="235.20" height="42.80" rx="12.00" fill="#2c2c2c" />
<text x="497.61" y="998.30" font-size="25.00" fill="#f4f4f4" textLength="82.70" lengthAdjust="spacingAndGlyphs"  stroke="#f4f4f4" stroke-width="0.50">Base-e</text>
<rect x="176.00" y="1025.60" width="235.00" height="43.10" rx="12.00" fill="#2c2c2c" />
<rect x="198.70" y="1033.00" width="190.30" height="28.70" rx="0.00" fill="#428ef5" />
<text x="225.70" y="1056.40" font-size="25.00" fill="#ffffff" textLength="137.19" lengthAdjust="spacingAndGlyphs"  stroke="#ffffff" stroke-width="0.50">Absorbance</text>
<rect x="421.30" y="1025.60" width="235.20" height="43.10" rx="12.00" fill="#2c2c2c" />
<text x="446.63" y="1056.40" font-size="25.00" fill="#f4f4f4" textLength="185.56" lengthAdjust="spacingAndGlyphs"  stroke="#f4f4f4" stroke-width="0.50">%Transmittance</text>
<rect x="140.80" y="1084.00" width="551.00" height="1.50" rx="0.00" fill="#2e2e2e" />
<text x="305.55" y="1121.30" font-size="25.00" fill="#e8e8e8" textLength="165.13" lengthAdjust="spacingAndGlyphs"  stroke="#e8e8e8" stroke-width="0.50">Gaussian filter</text>
<rect x="487.00" y="1100.00" width="29.80" height="29.40" rx="7.00" fill="#333333" />
<rect x="140.00" y="1154.00" width="552.00" height="337.00" rx="28.00" fill="#202020" />
<text x="292.52" y="1186.00" font-size="25.00" fill="#e4e4e4" textLength="248.83" lengthAdjust="spacingAndGlyphs"  stroke="#e4e4e4" stroke-width="0.50">X-AXIS PARAMETERS</text>
<text x="151.54" y="1237.20" font-size="25.00" fill="#ececec" textLength="323.57" lengthAdjust="spacingAndGlyphs"  stroke="#ececec" stroke-width="0.50">Enter minimum x-axis value:</text>
<rect x="490.60" y="1206.00" width="189.40" height="43.00" rx="12.00" fill="#323232" />
<text x="501.60" y="1237.30" font-size="25.00" fill="#ececec" textLength="97.31" lengthAdjust="spacingAndGlyphs"  stroke="#ececec" stroke-width="0.50">2894.22</text>
<text x="148.44" y="1294.50" font-size="25.00" fill="#ececec" textLength="330.46" lengthAdjust="spacingAndGlyphs"  stroke="#ececec" stroke-width="0.50">Enter maximum x-axis value:</text>
<rect x="493.70" y="1264.50" width="189.00" height="42.80" rx="12.00" fill="#323232" />
<text x="505.03" y="1294.50" font-size="25.00" fill="#ececec" textLength="97.11" lengthAdjust="spacingAndGlyphs"  stroke="#ececec" stroke-width="0.50">3093.84</text>
<rect x="176.00" y="1322.40" width="235.00" height="42.90" rx="12.00" fill="#2c2c2c" />
<rect x="198.70" y="1329.50" width="190.30" height="29.00" rx="0.00" fill="#428ef5" />
<text x="213.54" y="1353.00" font-size="25.00" fill="#ffffff" textLength="161.31" lengthAdjust="spacingAndGlyphs"  stroke="#ffffff" stroke-width="0.50">Wavenumbers</text>
<rect x="421.30" y="1322.40" width="235.20" height="42.90" rx="12.00" fill="#2c2c2c" />
<text x="492.48" y="1353.00" font-size="25.00" fill="#f4f4f4" textLength="92.63" lengthAdjust="spacingAndGlyphs"  stroke="#f4f4f4" stroke-width="0.50">Microns</text>
<text x="281.55" y="1411.70" font-size="25.00" fill="#e8e8e8" textLength="176.44" lengthAdjust="spacingAndGlyphs"  stroke="#e8e8e8" stroke-width="0.50">Reverse x-axis:</text>
<rect x="472.50" y="1381.20" width="77.50" height="42.80" rx="21.00" fill="#474747" />
<text x="494.77" y="1411.70" font-size="25.00" fill="#f4f4f4" textLength="31.34" lengthAdjust="spacingAndGlyphs"  stroke="#f4f4f4" stroke-width="0.50">off</text>
<rect x="245.40" y="1439.00" width="341.60" height="43.00" rx="12.00" fill="#2c2c2c" />
<text x="266.91" y="1470.20" font-size="25.00" fill="#ececec" textLength="297.46" lengthAdjust="spacingAndGlyphs"  stroke="#ececec" stroke-width="0.50">Reset limits (Command-r)</text>
</svg></body></html>
